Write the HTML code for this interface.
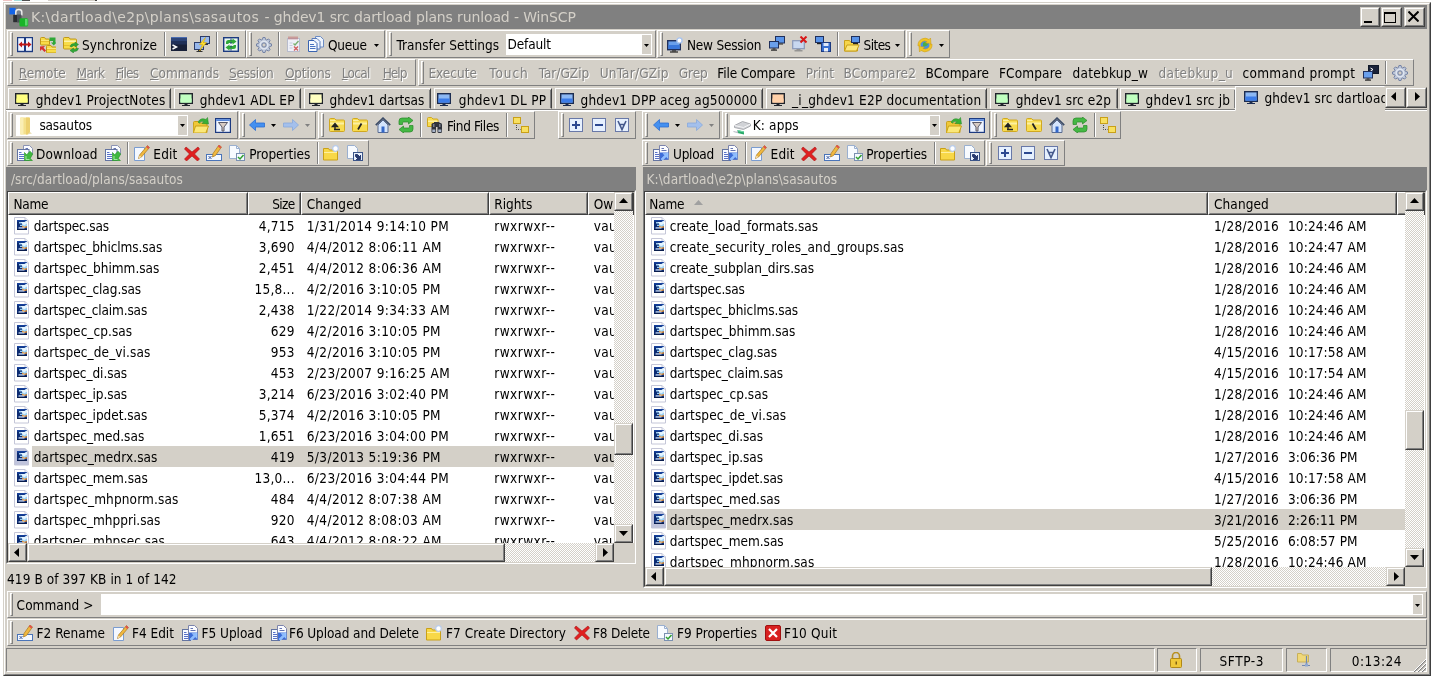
<!DOCTYPE html>
<html><head><meta charset="utf-8"><title>WinSCP</title>
<style>
html,body{margin:0;padding:0;background:#fff;}
body{width:1433px;height:676px;position:relative;overflow:hidden;font-family:"DejaVu Sans Condensed","DejaVu Sans","Liberation Sans",sans-serif;font-size:13.5px;color:#000;}
div,span.t,svg.i{position:absolute;box-sizing:border-box;}
span.t{opacity:0.999;white-space:pre;line-height:16px;height:16px;}
.win{background:#d4d0c8;border:1px solid;border-color:#d4d0c8 #404040 #404040 #d4d0c8;}
.win2{border:1px solid;border-color:#fff #808080 #808080 #fff;}
.title{background:#808080;}
.tt{font-family:"DejaVu Sans",sans-serif;font-size:14px;color:#d4d0c8;}
.band{border:1px solid;border-color:#fff #808080 #808080 #fff;}
.grip{border:1px solid;border-color:#fff #808080 #808080 #fff;}
.sep{border-left:1px solid #808080;border-right:1px solid #fff;}
.dis{color:#808080;text-shadow:1px 1px 0 #fff;}
.btn{background:#d4d0c8;border:1px solid;border-color:#d4d0c8 #404040 #404040 #d4d0c8;}
.btn>div{left:0;top:0;right:0;bottom:0;border:1px solid;border-color:#fff #808080 #808080 #fff;}
.sunk{border:1px solid;border-color:#808080 #fff #fff #808080;}
.sunk2{border:1px solid;border-color:#404040 #d4d0c8 #d4d0c8 #404040;}
.hdr{background:#d4d0c8;border:1px solid;border-color:#fff #404040 #404040 #fff;}
.hdr>div{left:0;top:0;right:0;bottom:0;border:1px solid;border-color:transparent #808080 #808080 transparent;}
.track{background:#e9e7e3;background:repeating-conic-gradient(#fff 0% 25%,#d4d0c8 0% 50%) 0 0/2px 2px;}
.path{background:#808080;}
.pt{color:#d4d0c8;}
.sel{background:#d4d0c8;}
.tab{border:1px solid;border-color:#fff #404040 transparent #fff;}
.panel{border:1px solid;border-color:#808080 #fff #fff #808080;}

</style></head>
<body>
<div style="left:3px;top:0px;width:9px;height:1px;background:#f0c4c4"></div>
<div style="left:14px;top:0px;width:8px;height:1px;background:#a8e0e0"></div>
<div style="left:22px;top:0px;width:8px;height:1px;background:#505050"></div>
<div style="left:48px;top:0px;width:47px;height:1px;background:#d4d0c8"></div>
<div style="left:95px;top:0px;width:2px;height:1px;background:#404040"></div>
<div class="win" style="left:3px;top:2px;width:1428px;height:674px;"></div>
<div class="win2" style="left:4px;top:3px;width:1426px;height:672px;"></div>
<div class="title" style="left:6px;top:5px;width:1421px;height:24px;"></div>
<svg class="i" style="left:8px;top:7px" width="22" height="20" viewBox="0 0 22 20"><rect x="1.400" y="0.800" width="6.200" height="6.600" fill="#1464e8"/><path d="M7.800 8.500v-3.500q0-2.500 3-2.500t3 2.500v3.500" fill="#78808c" stroke="#ececec" stroke-width="1.500"/><rect x="5.200" y="7.800" width="8" height="7.400" fill="#2a2c30"/><rect x="9" y="7.800" width="4.200" height="7.400" fill="#4a5058"/><rect x="11.400" y="11.200" width="8.800" height="8.400" rx="1.500" fill="#18b428"/><rect x="17" y="12" width="2.500" height="6.500" fill="#58d868"/></svg>
<span class="t tt" style="left:31px;top:9px;letter-spacing:0.36px;">K:\dartload\e2p\plans\sasautos</span>
<span class="t tt" style="left:264.4px;top:9px;letter-spacing:-0.13px;">- ghdev1 src dartload plans runload - WinSCP</span>
<div class="btn" style="left:1360px;top:7px;width:20px;height:20px;"><div></div></div>
<div style="left:1364px;top:21px;width:8px;height:2px;background:#000"></div>
<div class="btn" style="left:1381px;top:7px;width:21px;height:20px;"><div></div></div>
<div style="left:1384px;top:12px;width:12px;height:11px;border:1px solid #000;border-top-width:2px"></div>
<div class="btn" style="left:1404px;top:7px;width:21px;height:20px;"><div></div></div>
<svg class="i" style="left:1408px;top:11px" width="11" height="11" viewBox="0 0 11 11"><path d="M0.500 0.500l10 10M10.500 0.500l-10 10" stroke="#000" stroke-width="2"/></svg>
<div class="band" style="left:7px;top:30px;width:239px;height:28px;"></div>
<div class="grip" style="left:10px;top:32px;width:3px;height:24px;"></div>
<svg class="i" style="left:17px;top:37px" width="16" height="16" viewBox="0 0 16 16"><rect x="0.5" y="0.5" width="15" height="14" fill="#eef4ff" stroke="#1c3a80" stroke-width="1.4"/><rect x="7" y="0" width="2" height="15" fill="#1c3a80"/><path d="M1.5 7.5l3.5-3v2h6v-2l3.500 3-3.500 3v-2h-6v2z" fill="#c01818"/></svg>
<svg class="i" style="left:40px;top:37px" width="16" height="16" viewBox="0 0 16 16"><path d="M0.5 1.5q0-1 1-1h3.1l1 1.500h2.9q1 0 1 1v4q0 1-1 1h-7q-1 0-1-1z" fill="#f8dc48" stroke="#c09818"/><path d="M1 3.5h8v1.500h-8z" fill="#fdf2a8"/><path d="M1 4.5h8" stroke="#e8c030"/><path d="M6.5 9.5q0-1 1-1h3.5l1 1.500h3.5q1 0 1 1v4q0 1-1 1h-8q-1 0-1-1z" fill="#f8dc48" stroke="#c09818"/><path d="M7 11.5h9v1.500h-9z" fill="#fdf2a8"/><path d="M7 12.5h9" stroke="#e8c030"/><path d="M9.500 0.500h6v6h-2.500l0-2.500h-3.500z" fill="#30a838"/><path d="M11 5.500h5.500l-2.700 3z" fill="#30a838"/><path d="M0 9.500l5-0.500-1.500 1.700 2.500 2.800-1.500 1.500-2.700-2.700-1.800 1.700z" fill="#d83030"/></svg>
<svg class="i" style="left:63px;top:37px" width="16" height="16" viewBox="0 0 16 16"><path d="M0.5 1.5q0-1 1-1h4.5l1 1.500h5.5q1 0 1 1v8q0 1-1 1h-11q-1 0-1-1z" fill="#f8dc48" stroke="#c09818"/><path d="M1 3.5h12v1.500h-12z" fill="#fdf2a8"/><path d="M1 8.5h12" stroke="#e8c030"/><path d="M7 9.500q1-3.500 5-3v-1.500l3.500 2.500-3.500 2.500v-1.500q-2.500-0.300-3 1.500z" fill="#30a838" stroke="#1c8424" stroke-width="0.500"/><path d="M15.500 11.500q-1 3.500-5 3v1.500l-3.500-2.500 3.500-2.500v1.500q2.500 0.300 3-1.500z" fill="#30a838" stroke="#1c8424" stroke-width="0.500"/></svg>
<span class="t" style="left:82px;top:37px;letter-spacing:0.1px;">Synchronize</span>
<div class="sep" style="left:164px;top:32px;width:2px;height:24px;"></div>
<svg class="i" style="left:171px;top:37px" width="16" height="16" viewBox="0 0 16 16"><rect x="0" y="0" width="16" height="14" fill="#182038"/><rect x="0" y="0" width="16" height="1.500" fill="#4a6cb0"/><rect x="0" y="1.500" width="16" height="3" fill="#2c4478"/><rect x="0" y="4.500" width="16" height="3" fill="#203058"/><path d="M1.500 8l4 2-4 2" fill="none" stroke="#fff" stroke-width="1.400"/></svg>
<svg class="i" style="left:194px;top:36px" width="16" height="16" viewBox="0 0 16 16"><rect x="6.500" y="0.500" width="9" height="7" fill="#98b8ec" stroke="#2c3c68"/><rect x="10" y="8" width="4" height="1" fill="#333"/><rect x="0.500" y="6.500" width="9" height="7" fill="#98b8ec" stroke="#2c3c68"/><rect x="4" y="14" width="3" height="1" fill="#333"/><rect x="2.500" y="15" width="6" height="1" fill="#333"/><path d="M11.500 1.500l-6 7h3l-3 6.500 7-8.500h-3z" fill="#ffe030" stroke="#d8a808" stroke-width="0.600"/></svg>
<div class="sep" style="left:216px;top:32px;width:2px;height:24px;"></div>
<svg class="i" style="left:223px;top:37px" width="16" height="16" viewBox="0 0 16 16"><rect x="0.700" y="0.700" width="14.600" height="13.600" fill="#eaf6f0" stroke="#1c3a80" stroke-width="1.400"/><path d="M3 7v-1.500q0-2.500 2.500-2.500h4v-1.500l4 3-4 3v-1.500h-3.500q-0.500 0-0.500 0.500v0.500z" fill="#30a838"/><path d="M13 8v1.500q0 2.500-2.500 2.500h-4v1.500l-4-3 4-3v1.500h3.500q0.500 0 0.500-0.500v-0.500z" fill="#30a838"/><path d="M8 1.500v12" stroke="#1c3a80" stroke-width="1" stroke-dasharray="2 1.500"/></svg>
<div class="band" style="left:246px;top:30px;width:139px;height:28px;"></div>
<div class="grip" style="left:249px;top:32px;width:3px;height:24px;"></div>
<svg class="i" style="left:256px;top:37px" width="16" height="16" viewBox="0 0 16 16"><path d="M13.21 5.96L13.32 6.26L15.53 6.97L15.53 9.03L13.32 9.74L13.13 10.24L13.00 10.53L14.05 12.59L12.59 14.05L10.53 13.00L10.04 13.21L9.74 13.32L9.03 15.53L6.97 15.53L6.26 13.32L5.76 13.13L5.47 13.00L3.41 14.05L1.95 12.59L3.00 10.53L2.79 10.04L2.68 9.74L0.47 9.03L0.47 6.97L2.68 6.26L2.87 5.76L3.00 5.47L1.95 3.41L3.41 1.95L5.47 3.00L5.96 2.79L6.26 2.68L6.97 0.47L9.03 0.47L9.74 2.68L10.24 2.87L10.53 3.00L12.59 1.95L14.05 3.41L13.00 5.47z" fill="#bcc6d8" stroke="#6c7ca0" stroke-width="0.900" stroke-linejoin="round"/><circle cx="8" cy="8" r="3.800" fill="none" stroke="#dfe5f0" stroke-width="1.400"/><circle cx="8" cy="8" r="2.100" fill="#d4d0c8" stroke="#6c7ca0" stroke-width="0.900"/></svg>
<div class="sep" style="left:278px;top:32px;width:2px;height:24px;"></div>
<svg class="i" style="left:286px;top:36px" width="16" height="16" viewBox="0 0 16 16"><rect x="1.500" y="2.500" width="12" height="13" fill="#eef0f8" stroke="#b8bccc"/><path d="M3 0.500v3M5 0.500v3M7 0.500v3M9 0.500v3M11 0.500v3" stroke="#c06868" stroke-width="1"/><path d="M7.500 7.500l1.500 1.500 3.500-4" fill="none" stroke="#78b070" stroke-width="1.400"/><path d="M8 10.500l4 4M12 10.500l-4 4" stroke="#d06060" stroke-width="1.400"/><path d="M3.500 7h3M3.500 9.500h3M3.500 12h3" stroke="#c4cce0"/></svg>
<svg class="i" style="left:308px;top:36px" width="16" height="16" viewBox="0 0 16 16"><path d="M7.500 0.500h5l3 3v7.500h-8z" fill="#eef4fd" stroke="#6c8cc4"/><path d="M4 2.500h5l3 3v7.500h-8z" fill="#eef4fd" stroke="#5a7cbc"/><path d="M0.500 4.500h5.500l3 3v8h-8.500z" fill="#f6faff" stroke="#3a64b0"/><path d="M2 8.500h4M2 10.500h5.500M2 12.500h5.500" stroke="#4a74c0" stroke-width="1"/></svg>
<span class="t" style="left:328px;top:37px;letter-spacing:-0.23px;">Queue</span>
<svg class="i" style="left:374px;top:44px" width="5" height="3" viewBox="0 0 5 3"><path d="M0 0h5L2.5 3z" fill="#000"/></svg>
<div class="band" style="left:386px;top:30px;width:270px;height:28px;"></div>
<div class="grip" style="left:389px;top:32px;width:3px;height:24px;"></div>
<span class="t" style="left:396.5px;top:37px;letter-spacing:0.02px;">Transfer Settings</span>
<div style="left:506px;top:34px;width:146px;height:21px;background:#fff"></div>
<span class="t" style="left:507.5px;top:36px;letter-spacing:-0.15px;">Default</span>
<div style="left:642px;top:35px;width:9px;height:19px;background:#d4d0c8"></div>
<svg class="i" style="left:644px;top:44px" width="5" height="3" viewBox="0 0 5 3"><path d="M0 0h5L2.5 3z" fill="#000"/></svg>
<div class="band" style="left:657px;top:30px;width:248px;height:28px;"></div>
<div class="grip" style="left:660px;top:32px;width:3px;height:24px;"></div>
<svg class="i" style="left:667px;top:37px" width="16" height="16" viewBox="0 0 16 16"><rect x="0.700" y="3.700" width="12.600" height="9" fill="#6aa0ec" stroke="#20305c" stroke-width="1.400"/><rect x="1.400" y="8" width="11.200" height="4" fill="#3a78dc"/><rect x="5" y="13.400" width="4" height="1" fill="#222"/><rect x="3" y="14.400" width="8" height="1.200" fill="#222"/><circle cx="12.500" cy="3.500" r="2.600" fill="#fff" stroke="#a8c4f0" stroke-width="1.400"/></svg>
<span class="t" style="left:687px;top:37px;letter-spacing:-0.23px;">New Session</span>
<svg class="i" style="left:769px;top:36px" width="16" height="16" viewBox="0 0 16 16"><rect x="6.500" y="0.500" width="9" height="6.500" fill="#5a94e8" stroke="#20305c"/><rect x="0.500" y="5.500" width="9" height="6.500" fill="#6aa0ec" stroke="#20305c"/><rect x="10" y="7.500" width="4" height="1" fill="#222"/><rect x="3.500" y="12.500" width="3" height="1" fill="#222"/><rect x="2" y="13.500" width="6" height="1.200" fill="#222"/></svg>
<svg class="i" style="left:792px;top:36px" width="16" height="16" viewBox="0 0 16 16"><rect x="0.700" y="4.700" width="11.600" height="8" fill="#c8d8f0" stroke="#8898b8" stroke-width="1.200"/><rect x="4.500" y="13.200" width="4" height="1" fill="#888"/><rect x="2.500" y="14.200" width="8" height="1.200" fill="#888"/><path d="M8.500 0.500l6 6M14.500 0.500l-6 6" stroke="#d81818" stroke-width="2"/></svg>
<svg class="i" style="left:815px;top:36px" width="16" height="16" viewBox="0 0 16 16"><rect x="0.500" y="0.500" width="8" height="6" fill="#5a94e8" stroke="#20305c"/><rect x="2" y="7" width="5" height="1.200" fill="#222"/><rect x="6.500" y="6.500" width="9" height="9" fill="#3a70d0" stroke="#1c3a80"/><rect x="8.500" y="7" width="5" height="3" fill="#dfe8f8"/><rect x="9" y="12" width="4" height="3.500" fill="#e8eef8"/></svg>
<div class="sep" style="left:837px;top:32px;width:2px;height:24px;"></div>
<svg class="i" style="left:844px;top:36px" width="16" height="16" viewBox="0 0 16 16"><path d="M0.500 4.500h5l1 1.500h7v9h-13z" fill="#f6d64a" stroke="#c9a018"/><path d="M0.500 15l2.500-6h12l-2.500 6z" fill="#fbe67a" stroke="#c9a018"/><rect x="7.500" y="0.500" width="8" height="6" fill="#5a94e8" stroke="#20305c"/><rect x="9" y="7" width="5" height="1.200" fill="#222"/></svg>
<span class="t" style="left:863.5px;top:37px;letter-spacing:-0.56px;">Sites</span>
<svg class="i" style="left:895px;top:44px" width="5" height="3" viewBox="0 0 5 3"><path d="M0 0h5L2.5 3z" fill="#000"/></svg>
<div class="band" style="left:906px;top:30px;width:44px;height:28px;"></div>
<div class="grip" style="left:909px;top:32px;width:3px;height:24px;"></div>
<svg class="i" style="left:917px;top:37px" width="16" height="16" viewBox="0 0 16 16"><circle cx="8" cy="8" r="4.500" fill="#4a90e0"/><path d="M6 6q2-2 4 0t-1 3-3 0z" fill="#48b048"/><path d="M1 9a7 7 0 0 1 11-6.500l1.500-1.500 0.500 5.500-5.500-0.500 1.500-1.500a4.800 4.800 0 0 0-7 4.500z" fill="#f0c428" stroke="#c89810" stroke-width="0.500"/><path d="M15 7a7 7 0 0 1-11 6.500l-1.500 1.500-0.500-5.500 5.500 0.500-1.500 1.500a4.800 4.800 0 0 0 7-4.500z" fill="#f0c428" stroke="#c89810" stroke-width="0.500"/></svg>
<svg class="i" style="left:939px;top:44px" width="5" height="3" viewBox="0 0 5 3"><path d="M0 0h5L2.5 3z" fill="#000"/></svg>
<div class="band" style="left:7px;top:59px;width:409px;height:27px;"></div>
<div class="grip" style="left:10px;top:61px;width:3px;height:23px;"></div>
<span class="t dis" style="left:18.8px;top:65px;letter-spacing:0.04px"><u>R</u>emote</span>
<span class="t dis" style="left:76.6px;top:65px;letter-spacing:-0.52px"><u>M</u>ark</span>
<span class="t dis" style="left:115.6px;top:65px;letter-spacing:-0.79px"><u>F</u>iles</span>
<span class="t dis" style="left:150px;top:65px;letter-spacing:0.03px"><u>C</u>ommands</span>
<span class="t dis" style="left:229px;top:65px;letter-spacing:-0.26px"><u>S</u>ession</span>
<span class="t dis" style="left:284.9px;top:65px;letter-spacing:-0.15px"><u>O</u>ptions</span>
<span class="t dis" style="left:341.8px;top:65px;letter-spacing:-0.74px"><u>L</u>ocal</span>
<span class="t dis" style="left:382.7px;top:65px;letter-spacing:-0.97px"><u>H</u>elp</span>
<div class="band" style="left:418px;top:59px;width:996px;height:27px;"></div>
<div class="grip" style="left:421px;top:61px;width:3px;height:23px;"></div>
<span class="t dis" style="left:428.4px;top:65px;letter-spacing:0.01px;">Execute</span>
<span class="t dis" style="left:489.3px;top:65px;letter-spacing:0.96px;">Touch</span>
<span class="t dis" style="left:538.7px;top:65px;letter-spacing:0.01px;">Tar/GZip</span>
<span class="t dis" style="left:599.8px;top:65px;letter-spacing:0.18px;">UnTar/GZip</span>
<span class="t dis" style="left:678.8px;top:65px;letter-spacing:-0.1px;">Grep</span>
<span class="t" style="left:717.3px;top:65px;letter-spacing:-0.11px;">File Compare</span>
<span class="t dis" style="left:805.8px;top:65px;letter-spacing:0.07px;">Print</span>
<span class="t dis" style="left:843.5px;top:65px;letter-spacing:0.2px;">BCompare2</span>
<span class="t" style="left:925.6px;top:65px;letter-spacing:0.03px;">BCompare</span>
<span class="t" style="left:999px;top:65px;letter-spacing:0.13px;">FCompare</span>
<span class="t" style="left:1072.6px;top:65px;letter-spacing:0.25px;">datebkup_w</span>
<span class="t dis" style="left:1158.5px;top:65px;letter-spacing:0.38px;">datebkup_u</span>
<span class="t" style="left:1242.5px;top:65px;letter-spacing:0.3px;">command prompt</span>
<svg class="i" style="left:1363px;top:65px" width="16" height="16" viewBox="0 0 16 16"><rect x="5.500" y="0.500" width="10" height="8" fill="#1a2238" stroke="#101828"/><path d="M7.500 3l2.500 1.500-2.500 1.500" fill="none" stroke="#fff" stroke-width="1"/><rect x="0.500" y="6.500" width="9" height="6.500" fill="#6aa0ec" stroke="#20305c"/><rect x="3.500" y="13.500" width="3" height="1" fill="#222"/><rect x="2" y="14.500" width="6" height="1.200" fill="#222"/></svg>
<div class="sep" style="left:1385px;top:61px;width:2px;height:23px;"></div>
<svg class="i" style="left:1392px;top:65px" width="16" height="16" viewBox="0 0 16 16"><path d="M13.21 5.96L13.32 6.26L15.53 6.97L15.53 9.03L13.32 9.74L13.13 10.24L13.00 10.53L14.05 12.59L12.59 14.05L10.53 13.00L10.04 13.21L9.74 13.32L9.03 15.53L6.97 15.53L6.26 13.32L5.76 13.13L5.47 13.00L3.41 14.05L1.95 12.59L3.00 10.53L2.79 10.04L2.68 9.74L0.47 9.03L0.47 6.97L2.68 6.26L2.87 5.76L3.00 5.47L1.95 3.41L3.41 1.95L5.47 3.00L5.96 2.79L6.26 2.68L6.97 0.47L9.03 0.47L9.74 2.68L10.24 2.87L10.53 3.00L12.59 1.95L14.05 3.41L13.00 5.47z" fill="#bcc6d8" stroke="#6c7ca0" stroke-width="0.900" stroke-linejoin="round"/><circle cx="8" cy="8" r="3.800" fill="none" stroke="#dfe5f0" stroke-width="1.400"/><circle cx="8" cy="8" r="2.100" fill="#d4d0c8" stroke="#6c7ca0" stroke-width="0.900"/></svg>
<div class="tab" style="left:8px;top:88px;width:163px;height:21px;"><div style="left:auto;right:0;top:1px;bottom:0;width:1px;background:#808080"></div></div>
<svg class="i" style="left:15px;top:93px" width="14" height="13" viewBox="0 0 14 13"><rect x="0.700" y="0.700" width="12.600" height="9.600" fill="#ffff80" stroke="#20242c" stroke-width="1.400"/><rect x="1.400" y="5.500" width="11.200" height="4.100" fill="#ffff80"/><rect x="5.500" y="11" width="3" height="1" fill="#20242c"/><rect x="3" y="12" width="8" height="1" fill="#20242c"/></svg>
<span class="t" style="left:35.7px;top:92px;letter-spacing:0.2px;">ghdev1 ProjectNotes</span>
<div class="tab" style="left:174px;top:88px;width:127px;height:21px;"><div style="left:auto;right:0;top:1px;bottom:0;width:1px;background:#808080"></div></div>
<svg class="i" style="left:179px;top:93px" width="14" height="13" viewBox="0 0 14 13"><rect x="0.700" y="0.700" width="12.600" height="9.600" fill="#c0ffc0" stroke="#20242c" stroke-width="1.400"/><rect x="1.400" y="5.500" width="11.200" height="4.100" fill="#c0ffc0"/><rect x="5.500" y="11" width="3" height="1" fill="#20242c"/><rect x="3" y="12" width="8" height="1" fill="#20242c"/></svg>
<span class="t" style="left:199.7px;top:92px;letter-spacing:0.18px;">ghdev1 ADL EP</span>
<div class="tab" style="left:304px;top:88px;width:127px;height:21px;"><div style="left:auto;right:0;top:1px;bottom:0;width:1px;background:#808080"></div></div>
<svg class="i" style="left:309px;top:93px" width="14" height="13" viewBox="0 0 14 13"><rect x="0.700" y="0.700" width="12.600" height="9.600" fill="#ffffc0" stroke="#20242c" stroke-width="1.400"/><rect x="1.400" y="5.500" width="11.200" height="4.100" fill="#ffffc0"/><rect x="5.500" y="11" width="3" height="1" fill="#20242c"/><rect x="3" y="12" width="8" height="1" fill="#20242c"/></svg>
<span class="t" style="left:329.6px;top:92px;letter-spacing:0.03px;">ghdev1 dartsas</span>
<div class="tab" style="left:434px;top:88px;width:118px;height:21px;"><div style="left:auto;right:0;top:1px;bottom:0;width:1px;background:#808080"></div></div>
<svg class="i" style="left:437px;top:93px" width="14" height="13" viewBox="0 0 14 13"><rect x="0.700" y="0.700" width="12.600" height="9.600" fill="#8cb8f4" stroke="#1c2c50" stroke-width="1.400"/><rect x="1.400" y="5.500" width="11.200" height="4.100" fill="#3c7ce8"/><rect x="5.500" y="11" width="3" height="1" fill="#1c2c50"/><rect x="3" y="12" width="8" height="1" fill="#1c2c50"/></svg>
<span class="t" style="left:458.8px;top:92px;letter-spacing:0.31px;">ghdev1 DL PP</span>
<div class="tab" style="left:555px;top:88px;width:208px;height:21px;"><div style="left:auto;right:0;top:1px;bottom:0;width:1px;background:#808080"></div></div>
<svg class="i" style="left:560px;top:93px" width="14" height="13" viewBox="0 0 14 13"><rect x="0.700" y="0.700" width="12.600" height="9.600" fill="#8cb8f4" stroke="#1c2c50" stroke-width="1.400"/><rect x="1.400" y="5.500" width="11.200" height="4.100" fill="#3c7ce8"/><rect x="5.500" y="11" width="3" height="1" fill="#1c2c50"/><rect x="3" y="12" width="8" height="1" fill="#1c2c50"/></svg>
<span class="t" style="left:580.5px;top:92px;letter-spacing:0.21px;">ghdev1 DPP aceg ag500000</span>
<div class="tab" style="left:766px;top:88px;width:221px;height:21px;"><div style="left:auto;right:0;top:1px;bottom:0;width:1px;background:#808080"></div></div>
<svg class="i" style="left:771px;top:93px" width="14" height="13" viewBox="0 0 14 13"><rect x="0.700" y="0.700" width="12.600" height="9.600" fill="#ffd0a8" stroke="#20242c" stroke-width="1.400"/><rect x="1.400" y="5.500" width="11.200" height="4.100" fill="#ffd0a8"/><rect x="5.500" y="11" width="3" height="1" fill="#20242c"/><rect x="3" y="12" width="8" height="1" fill="#20242c"/></svg>
<span class="t" style="left:792px;top:92px;letter-spacing:0.22px;">_i_ghdev1 E2P documentation</span>
<div class="tab" style="left:990px;top:88px;width:128px;height:21px;"><div style="left:auto;right:0;top:1px;bottom:0;width:1px;background:#808080"></div></div>
<svg class="i" style="left:995px;top:93px" width="14" height="13" viewBox="0 0 14 13"><rect x="0.700" y="0.700" width="12.600" height="9.600" fill="#c0ffc0" stroke="#20242c" stroke-width="1.400"/><rect x="1.400" y="5.500" width="11.200" height="4.100" fill="#c0ffc0"/><rect x="5.500" y="11" width="3" height="1" fill="#20242c"/><rect x="3" y="12" width="8" height="1" fill="#20242c"/></svg>
<span class="t" style="left:1015.7px;top:92px;letter-spacing:0.11px;">ghdev1 src e2p</span>
<div class="tab" style="left:1120px;top:88px;width:116px;height:21px;"><div style="left:auto;right:0;top:1px;bottom:0;width:1px;background:#808080"></div></div>
<svg class="i" style="left:1125px;top:93px" width="14" height="13" viewBox="0 0 14 13"><rect x="0.700" y="0.700" width="12.600" height="9.600" fill="#c0ffc0" stroke="#20242c" stroke-width="1.400"/><rect x="1.400" y="5.500" width="11.200" height="4.100" fill="#c0ffc0"/><rect x="5.500" y="11" width="3" height="1" fill="#20242c"/><rect x="3" y="12" width="8" height="1" fill="#20242c"/></svg>
<span class="t" style="left:1145.6px;top:92px;letter-spacing:0.2px;">ghdev1 src jb</span>
<div style="left:6px;top:109px;width:1230px;height:1px;background:#808080"></div>
<div style="left:6px;top:110px;width:1230px;height:1px;background:#fff"></div>
<div style="left:1385px;top:109px;width:42px;height:1px;background:#808080"></div>
<div style="left:1385px;top:110px;width:42px;height:1px;background:#fff"></div>
<div style="left:1235px;top:86px;width:150px;height:25px;background:#d4d0c8;border:1px solid;border-color:#fff transparent transparent #fff;"></div>
<svg class="i" style="left:1244px;top:91px" width="14" height="13" viewBox="0 0 14 13"><rect x="0.700" y="0.700" width="12.600" height="9.600" fill="#8cb8f4" stroke="#1c2c50" stroke-width="1.400"/><rect x="1.400" y="5.500" width="11.200" height="4.100" fill="#3c7ce8"/><rect x="5.500" y="11" width="3" height="1" fill="#1c2c50"/><rect x="3" y="12" width="8" height="1" fill="#1c2c50"/></svg>
<div style="left:1264px;top:87px;width:121px;height:22px;overflow:hidden"><span class="t" style="left:0.400px;top:3px;letter-spacing:0.11px">ghdev1 src dartload plans runload</span></div>
<div class="btn" style="left:1385px;top:87px;width:21px;height:21px;"><div></div></div>
<svg class="i" style="left:1391px;top:92px" width="5" height="9" viewBox="0 0 5 9"><path d="M5 0v9L0 4.500z"/></svg>
<div class="btn" style="left:1406px;top:87px;width:21px;height:21px;"><div></div></div>
<svg class="i" style="left:1415px;top:92px" width="5" height="9" viewBox="0 0 5 9"><path d="M0 0v9L5 4.500z"/></svg>
<div class="band" style="left:7px;top:111px;width:231px;height:28px;"></div>
<div class="grip" style="left:10px;top:113px;width:3px;height:24px;"></div>
<div style="left:16px;top:115px;width:172px;height:21px;background:#fff"></div>
<svg class="i" style="left:19px;top:117px" width="14" height="19" viewBox="0 0 14 19"><path d="M1 1.500q0-1 1-1h8q1 0 1 1v14l-2.500 2h-6.500q-1 0-1-1z" fill="#f4e08c"/><path d="M1 1.500q0-1 1-1h2.500v17h-2.500q-1 0-1-1z" fill="#faeeb4"/><path d="M7 0.500h3q1 0 1 1v14l-2.500 2h-1.500z" fill="#ecd070"/><path d="M11 15l2 1.500-4.500 1z" fill="#e8dcb0"/></svg>
<span class="t" style="left:39.4px;top:117px;letter-spacing:-0.15px;">sasautos</span>
<div style="left:178px;top:116px;width:9px;height:19px;background:#d4d0c8"></div>
<svg class="i" style="left:180px;top:124px" width="5" height="3" viewBox="0 0 5 3"><path d="M0 0h5L2.5 3z" fill="#000"/></svg>
<svg class="i" style="left:193px;top:117px" width="16" height="16" viewBox="0 0 16 16"><path d="M0.500 5.500q0-1 1-1h3.500l1.500 1.500h6.500q1 0 1 1v8q0 1-1 1h-12q-1 0-1-1z" fill="#f0c838" stroke="#c8a018"/><path d="M0.500 15.500l2-6.500h13l-2.500 6.500q-0.200 0.500-1 0.500h-11z" fill="#fbe878" stroke="#c8a018"/><path d="M5 5q3-5 8-2.500l1.500-2 1 6.500-6.500-0.500 1.800-1.800q-3-1.200-4.500 1.500z" fill="#38b038" stroke="#208820" stroke-width="0.500"/></svg>
<svg class="i" style="left:215px;top:118px" width="16" height="16" viewBox="0 0 16 16"><rect x="0.600" y="0.600" width="14.800" height="13.800" fill="#eef4ff" stroke="#1c3a80" stroke-width="1.200"/><rect x="1.200" y="1.200" width="13.600" height="1.800" fill="#5888dc"/><path d="M3.500 4.500h9l-3.500 4.500v4h-2v-4z" fill="#d8ccc4" stroke="#585868" stroke-width="1"/></svg>
<div class="band" style="left:239px;top:111px;width:77px;height:28px;"></div>
<div class="grip" style="left:242px;top:113px;width:3px;height:24px;"></div>
<svg class="i" style="left:249px;top:119px" width="16" height="12" viewBox="0 0 16 12"><path d="M0.500 6l6-5.500v3.500h9v4h-9v3.500z" fill="#4490f0" stroke="#2c6cd0" stroke-width="0.800"/></svg>
<svg class="i" style="left:271px;top:124px" width="5" height="3" viewBox="0 0 5 3"><path d="M0 0h5L2.5 3z" fill="#000"/></svg>
<svg class="i" style="left:283px;top:119px" width="16" height="12" viewBox="0 0 16 12"><path d="M15.500 6l-6-5.500v3.500h-9v4h9v3.500z" fill="#a4c0ec" stroke="#88a8dc" stroke-width="0.800"/></svg>
<svg class="i" style="left:305px;top:124px" width="5" height="3" viewBox="0 0 5 3"><path d="M0 0h5L2.5 3z" fill="#808080"/></svg>
<div class="band" style="left:318px;top:111px;width:217px;height:28px;"></div>
<div class="grip" style="left:321px;top:113px;width:3px;height:24px;"></div>
<svg class="i" style="left:329px;top:117px" width="16" height="16" viewBox="0 0 16 16"><path d="M0.500 2.500q0-1 1-1h4l1.500 1.500h7.500q1 0 1 1v9.500q0 1-1 1h-13q-1 0-1-1z" fill="#f8dc50" stroke="#d0a820"/><path d="M1 5.500h14v2h-14z" fill="#fdf0a0"/><path d="M1 3.500h5.500" stroke="#fdf0a0"/><path d="M5 12.500h6M6 12V7.500M3.500 9.500l2.500-3 2.500 3z" fill="#222" stroke="#222" stroke-width="1.400"/></svg>
<svg class="i" style="left:352px;top:117px" width="16" height="16" viewBox="0 0 16 16"><path d="M0.500 2.500q0-1 1-1h4l1.500 1.500h7.500q1 0 1 1v9.500q0 1-1 1h-13q-1 0-1-1z" fill="#f8dc50" stroke="#d0a820"/><path d="M1 5.500h14v2h-14z" fill="#fdf0a0"/><path d="M1 3.500h5.500" stroke="#fdf0a0"/><path d="M6 12.500l3.500-6" stroke="#222" stroke-width="1.800"/></svg>
<svg class="i" style="left:375px;top:117px" width="16" height="16" viewBox="0 0 16 16"><path d="M3 8v7.500h10v-7.500l-5-5z" fill="#d4e4fc" stroke="#5a6c90" stroke-width="1"/><rect x="6.500" y="9.500" width="3" height="6" fill="#3468c8"/><path d="M0.800 8.200l7.200-7 7.200 7" fill="none" stroke="#3c4c68" stroke-width="1.800" stroke-linejoin="miter"/></svg>
<svg class="i" style="left:398px;top:117px" width="16" height="16" viewBox="0 0 16 16"><path d="M1 7.500v-3.500q0-3 3-3h6.500v-1l4.500 3.500-4.500 3.500v-2h-5q-1 0-1 1v1.500z" fill="#44b844" stroke="#288828" stroke-width="0.700"/><path d="M15 8.500v3.500q0 3-3 3h-6.500v1l-4.500-3.500 4.500-3.500v2h5q1 0 1-1v-1.500z" fill="#44b844" stroke="#288828" stroke-width="0.700"/></svg>
<div class="sep" style="left:420px;top:113px;width:2px;height:24px;"></div>
<svg class="i" style="left:427px;top:117px" width="16" height="16" viewBox="0 0 16 16"><path d="M0.500 1.500q0-1 1-1h3l1.500 1.500h4q1 0 1 1v6.500h-10.500z" fill="#f8dc50" stroke="#d0a820"/><path d="M1 3.500h9.500v1.500h-9.500z" fill="#fdf0a0"/><rect x="4.500" y="6" width="4.500" height="10" rx="1.500" fill="#30343c"/><rect x="10.500" y="6" width="4.500" height="10" rx="1.500" fill="#30343c"/><rect x="7" y="5" width="5.500" height="5" fill="#30343c"/><rect x="5.300" y="12.500" width="3" height="2.500" fill="#a8b4c8"/><rect x="11.300" y="12.500" width="3" height="2.500" fill="#a8b4c8"/><rect x="6" y="7" width="1.500" height="3" fill="#787e8c"/><rect x="12" y="7" width="1.500" height="3" fill="#787e8c"/></svg>
<span class="t" style="left:447px;top:118px;letter-spacing:-0.31px;">Find Files</span>
<div class="sep" style="left:506px;top:113px;width:2px;height:24px;"></div>
<svg class="i" style="left:513px;top:117px" width="16" height="16" viewBox="0 0 16 16"><rect x="0.500" y="0.500" width="7" height="6" fill="#f8e060" stroke="#c9a018"/><rect x="8.500" y="9.500" width="7" height="6" fill="#f8e060" stroke="#c9a018"/><path d="M3.500 8v4.500h4" fill="none" stroke="#444" stroke-dasharray="1 1"/></svg>
<div class="band" style="left:558px;top:111px;width:78px;height:28px;"></div>
<div class="grip" style="left:561px;top:113px;width:3px;height:24px;"></div>
<svg class="i" style="left:569px;top:118px" width="14" height="14" viewBox="0 0 14 14"><rect x="0.500" y="0.500" width="13" height="13" fill="#e6f0fe" stroke="#6878a8"/><path d="M3 7h8M7 3v8" stroke="#2c4890" stroke-width="2"/></svg>
<svg class="i" style="left:592px;top:118px" width="14" height="14" viewBox="0 0 14 14"><rect x="0.500" y="0.500" width="13" height="13" fill="#e6f0fe" stroke="#6878a8"/><path d="M3 7h8" stroke="#2c4890" stroke-width="2"/></svg>
<svg class="i" style="left:615px;top:118px" width="14" height="14" viewBox="0 0 14 14"><rect x="0.500" y="0.500" width="13" height="13" fill="#e6f0fe" stroke="#6878a8"/><path d="M3 3l4 8.500 4-8.500M4.500 6.500h5" fill="none" stroke="#44588c" stroke-width="1.600"/></svg>
<div class="band" style="left:7px;top:140px;width:362px;height:26px;"></div>
<div class="grip" style="left:10px;top:142px;width:3px;height:22px;"></div>
<svg class="i" style="left:17px;top:145px" width="16" height="16" viewBox="0 0 16 16"><path d="M6.500 0.500h6l3 3v6h-9z" fill="#fbfcff" stroke="#8c94b4"/><path d="M8.500 3.500h2.500" stroke="#6474b4"/><rect x="0.500" y="4.500" width="11.500" height="11" fill="#f8fbff" stroke="#6474a0"/><path d="M2 7.500h2.500M2 9.500h5M2 11.500h5M2 13.500h5" stroke="#5870c8"/><path d="M15.700 9l-2.700-2.800-3.300 3.600-2.200-2.300v8.200h8l-2.300-2.300z" fill="#40b840" stroke="#249024" stroke-width="0.600"/><path d="M9 11v3.500h3.500" fill="none" stroke="#b8f0b8" stroke-width="0.800"/></svg>
<span class="t" style="left:36px;top:146px;letter-spacing:0.16px;">Download</span>
<svg class="i" style="left:105px;top:145px" width="16" height="16" viewBox="0 0 16 16"><path d="M6.500 0.500h6l3 3v6h-9z" fill="#fbfcff" stroke="#8c94b4"/><path d="M8.500 3.500h2.500" stroke="#6474b4"/><rect x="0.500" y="4.500" width="11.500" height="11" fill="#f8fbff" stroke="#6474a0"/><path d="M2 7.500h2.500M2 9.500h5M2 11.500h5M2 13.500h5" stroke="#5870c8"/><path d="M15.700 9l-2.700-2.800-3.300 3.600-2.200-2.300v8.200h8l-2.300-2.300z" fill="#40b840" stroke="#249024" stroke-width="0.600"/><path d="M9 11v3.500h3.500" fill="none" stroke="#b8f0b8" stroke-width="0.800"/></svg>
<div class="sep" style="left:127px;top:142px;width:2px;height:22px;"></div>
<svg class="i" style="left:134px;top:145px" width="16" height="16" viewBox="0 0 16 16"><path d="M0.500 2.500h10v13h-10z" fill="#f4f8ff" stroke="#7a9cd0"/><path d="M13.500 0.500l2 2-8 9.500-3 1.500 1-3.500z" fill="#f0b840" stroke="#a87820" stroke-width="0.700"/><path d="M13.500 0.500l2 2-1.300 1.500-2-2z" fill="#e05050"/><path d="M4.500 13.500l1-3 2 1.500z" fill="#f8e0b0"/></svg>
<span class="t" style="left:153.3px;top:146px;letter-spacing:0.16px;">Edit</span>
<svg class="i" style="left:184px;top:146px" width="16" height="15" viewBox="0 0 16 15"><path d="M2 1l6 5 6-5 1.500 2-5 5 5 5-2 2-5.500-5-5.500 5-2-2 5-5-5-5z" fill="#e02020" stroke="#a81010" stroke-width="0.600"/></svg>
<svg class="i" style="left:206px;top:145px" width="16" height="16" viewBox="0 0 16 16"><rect x="0.500" y="9.500" width="15" height="6" fill="#f4f8ff" stroke="#4a74b8"/><path d="M2.500 11l3 3M5.500 11l-3 3" stroke="#3a5aa0"/><path d="M13 0l2.500 2-6 8.500-3 1.500 0.500-3.500z" fill="#f0b840" stroke="#a87820" stroke-width="0.700"/><path d="M13 0l2.500 2-1.200 1.600-2.500-2z" fill="#e05050"/></svg>
<svg class="i" style="left:229px;top:145px" width="16" height="16" viewBox="0 0 16 16"><path d="M0.500 0.500h7l3 3v10h-10z" fill="#f8fbff" stroke="#9ab0d0"/><path d="M7.500 0.500v3h3" fill="none" stroke="#9ab0d0"/><rect x="7.500" y="8.500" width="8" height="7" fill="#f4f8ff" stroke="#7a90b0"/><path d="M9 12l2 2 3.500-4" fill="none" stroke="#30a030" stroke-width="1.500"/></svg>
<span class="t" style="left:249.3px;top:146px;letter-spacing:-0.04px;">Properties</span>
<div class="sep" style="left:317px;top:142px;width:2px;height:22px;"></div>
<svg class="i" style="left:323px;top:145px" width="16" height="16" viewBox="0 0 16 16"><path d="M0.500 3.500h5l1 1.500h8v10h-14z" fill="#f8d848" stroke="#c9a018"/><rect x="1" y="7" width="13" height="1" fill="#fff0a0"/><circle cx="12.500" cy="3.500" r="2.800" fill="#fff" stroke="#b8ccec" stroke-width="1.200"/></svg>
<svg class="i" style="left:347px;top:145px" width="16" height="16" viewBox="0 0 16 16"><path d="M0.500 0.500h7l3 3v10h-10z" fill="#f8fbff" stroke="#9ab0d0"/><rect x="6.500" y="7.500" width="9" height="8" fill="#e8f0fc" stroke="#3a5488"/><path d="M8.500 9.500h2l3 3v-2.500h0v4.500h-4.500l2.500 0-3-3z" fill="#2a3c70" stroke="#2a3c70"/></svg>
<div class="band" style="left:642px;top:111px;width:78px;height:28px;"></div>
<div class="grip" style="left:645px;top:113px;width:3px;height:24px;"></div>
<svg class="i" style="left:653px;top:119px" width="16" height="12" viewBox="0 0 16 12"><path d="M0.500 6l6-5.500v3.500h9v4h-9v3.500z" fill="#4490f0" stroke="#2c6cd0" stroke-width="0.800"/></svg>
<svg class="i" style="left:675px;top:124px" width="5" height="3" viewBox="0 0 5 3"><path d="M0 0h5L2.5 3z" fill="#000"/></svg>
<svg class="i" style="left:687px;top:119px" width="16" height="12" viewBox="0 0 16 12"><path d="M15.500 6l-6-5.500v3.500h-9v4h9v3.500z" fill="#a4c0ec" stroke="#88a8dc" stroke-width="0.800"/></svg>
<svg class="i" style="left:709px;top:124px" width="5" height="3" viewBox="0 0 5 3"><path d="M0 0h5L2.5 3z" fill="#808080"/></svg>
<div class="band" style="left:722px;top:111px;width:268px;height:28px;"></div>
<div class="grip" style="left:725px;top:113px;width:3px;height:24px;"></div>
<div style="left:730px;top:115px;width:210px;height:21px;background:#fff"></div>
<svg class="i" style="left:733px;top:121px" width="18" height="14" viewBox="0 0 18 14"><path d="M1.500 4.500l8-4 8 2.500v2l-7 3.500-9-2z" fill="#d0d2d6" stroke="#9a9ca2" stroke-width="0.800"/><path d="M1.500 4.500l9 2 7-3.500" fill="none" stroke="#f4f4f6" stroke-width="1"/><path d="M4.500 9l6.500 1.500v3l-6.500-1.500z" fill="#28a868"/><path d="M4.500 9l6.500 1.500v1l-6.500-1.500z" fill="#70dca8"/><path d="M0.500 10.500l4 1v-1.500" fill="none" stroke="#b8bcc4" stroke-width="1.200"/></svg>
<span class="t" style="left:752.7px;top:117px;letter-spacing:0.15px;">K: apps</span>
<div style="left:930px;top:116px;width:9px;height:19px;background:#d4d0c8"></div>
<svg class="i" style="left:932px;top:124px" width="5" height="3" viewBox="0 0 5 3"><path d="M0 0h5L2.5 3z" fill="#000"/></svg>
<svg class="i" style="left:946px;top:117px" width="16" height="16" viewBox="0 0 16 16"><path d="M0.500 5.500q0-1 1-1h3.500l1.500 1.500h6.500q1 0 1 1v8q0 1-1 1h-12q-1 0-1-1z" fill="#f0c838" stroke="#c8a018"/><path d="M0.500 15.500l2-6.500h13l-2.500 6.500q-0.200 0.500-1 0.500h-11z" fill="#fbe878" stroke="#c8a018"/><path d="M5 5q3-5 8-2.500l1.500-2 1 6.500-6.500-0.500 1.800-1.800q-3-1.200-4.500 1.500z" fill="#38b038" stroke="#208820" stroke-width="0.500"/></svg>
<svg class="i" style="left:969px;top:118px" width="16" height="16" viewBox="0 0 16 16"><rect x="0.600" y="0.600" width="14.800" height="13.800" fill="#eef4ff" stroke="#1c3a80" stroke-width="1.200"/><rect x="1.200" y="1.200" width="13.600" height="1.800" fill="#5888dc"/><path d="M3.500 4.500h9l-3.500 4.500v4h-2v-4z" fill="#d8ccc4" stroke="#585868" stroke-width="1"/></svg>
<div class="band" style="left:991px;top:111px;width:130px;height:28px;"></div>
<div class="grip" style="left:994px;top:113px;width:3px;height:24px;"></div>
<svg class="i" style="left:1002px;top:117px" width="16" height="16" viewBox="0 0 16 16"><path d="M0.500 2.500q0-1 1-1h4l1.500 1.500h7.500q1 0 1 1v9.500q0 1-1 1h-13q-1 0-1-1z" fill="#f8dc50" stroke="#d0a820"/><path d="M1 5.500h14v2h-14z" fill="#fdf0a0"/><path d="M1 3.500h5.500" stroke="#fdf0a0"/><path d="M5 12.500h6M6 12V7.500M3.500 9.500l2.500-3 2.500 3z" fill="#222" stroke="#222" stroke-width="1.400"/></svg>
<svg class="i" style="left:1026px;top:117px" width="16" height="16" viewBox="0 0 16 16"><path d="M0.500 2.500q0-1 1-1h4l1.500 1.500h7.500q1 0 1 1v9.500q0 1-1 1h-13q-1 0-1-1z" fill="#f8dc50" stroke="#d0a820"/><path d="M1 5.500h14v2h-14z" fill="#fdf0a0"/><path d="M1 3.500h5.500" stroke="#fdf0a0"/><path d="M6.500 6.500l3.500 6" stroke="#222" stroke-width="1.800"/></svg>
<svg class="i" style="left:1049px;top:117px" width="16" height="16" viewBox="0 0 16 16"><path d="M3 8v7.500h10v-7.500l-5-5z" fill="#d4e4fc" stroke="#5a6c90" stroke-width="1"/><rect x="6.500" y="9.500" width="3" height="6" fill="#3468c8"/><path d="M0.800 8.200l7.200-7 7.200 7" fill="none" stroke="#3c4c68" stroke-width="1.800" stroke-linejoin="miter"/></svg>
<svg class="i" style="left:1072px;top:117px" width="16" height="16" viewBox="0 0 16 16"><path d="M1 7.500v-3.500q0-3 3-3h6.500v-1l4.500 3.500-4.500 3.500v-2h-5q-1 0-1 1v1.500z" fill="#44b844" stroke="#288828" stroke-width="0.700"/><path d="M15 8.500v3.500q0 3-3 3h-6.500v1l-4.500-3.500 4.500-3.500v2h5q1 0 1-1v-1.500z" fill="#44b844" stroke="#288828" stroke-width="0.700"/></svg>
<div class="sep" style="left:1094px;top:113px;width:2px;height:24px;"></div>
<svg class="i" style="left:1100px;top:117px" width="16" height="16" viewBox="0 0 16 16"><rect x="0.500" y="0.500" width="7" height="6" fill="#f8e060" stroke="#c9a018"/><rect x="8.500" y="9.500" width="7" height="6" fill="#f8e060" stroke="#c9a018"/><path d="M3.500 8v4.500h4" fill="none" stroke="#444" stroke-dasharray="1 1"/></svg>
<div class="band" style="left:642px;top:140px;width:343px;height:26px;"></div>
<div class="grip" style="left:645px;top:142px;width:3px;height:22px;"></div>
<svg class="i" style="left:653px;top:145px" width="16" height="16" viewBox="0 0 16 16"><rect x="0.500" y="4.500" width="8" height="11" fill="#f8fbff" stroke="#6474a0"/><path d="M2 7.500h2.500M2 9.500h5M2 11.500h5M2 13.500h5" stroke="#5870c8"/><path d="M6.500 0.500h6l3 3v11h-9z" fill="#fbfcff" stroke="#7c84ac"/><path d="M8.500 3.500h2.500M8.500 5.500h5" stroke="#6474b4"/><path d="M7 7.500h8.500v7h-5l-3.500 1z" fill="#3c6cd8"/><path d="M15 8v5.500l-1.800-1.800-3.700 3.800-1.500-1.500 3.700-3.800-1.700-1.700z" fill="#8cbcff" stroke="#b8d8ff" stroke-width="0.400"/></svg>
<span class="t" style="left:673px;top:146px;letter-spacing:-0.26px;">Upload</span>
<svg class="i" style="left:722px;top:145px" width="16" height="16" viewBox="0 0 16 16"><rect x="0.500" y="4.500" width="8" height="11" fill="#f8fbff" stroke="#6474a0"/><path d="M2 7.500h2.500M2 9.500h5M2 11.500h5M2 13.500h5" stroke="#5870c8"/><path d="M6.500 0.500h6l3 3v11h-9z" fill="#fbfcff" stroke="#7c84ac"/><path d="M8.500 3.500h2.500M8.500 5.500h5" stroke="#6474b4"/><path d="M7 7.500h8.500v7h-5l-3.500 1z" fill="#3c6cd8"/><path d="M15 8v5.500l-1.800-1.800-3.700 3.800-1.500-1.500 3.700-3.800-1.700-1.700z" fill="#8cbcff" stroke="#b8d8ff" stroke-width="0.400"/></svg>
<div class="sep" style="left:745px;top:142px;width:2px;height:22px;"></div>
<svg class="i" style="left:751px;top:145px" width="16" height="16" viewBox="0 0 16 16"><path d="M0.500 2.500h10v13h-10z" fill="#f4f8ff" stroke="#7a9cd0"/><path d="M13.500 0.500l2 2-8 9.500-3 1.500 1-3.500z" fill="#f0b840" stroke="#a87820" stroke-width="0.700"/><path d="M13.500 0.500l2 2-1.300 1.500-2-2z" fill="#e05050"/><path d="M4.500 13.500l1-3 2 1.500z" fill="#f8e0b0"/></svg>
<span class="t" style="left:770.6px;top:146px;letter-spacing:0.16px;">Edit</span>
<svg class="i" style="left:801px;top:146px" width="16" height="15" viewBox="0 0 16 15"><path d="M2 1l6 5 6-5 1.500 2-5 5 5 5-2 2-5.500-5-5.500 5-2-2 5-5-5-5z" fill="#e02020" stroke="#a81010" stroke-width="0.600"/></svg>
<svg class="i" style="left:824px;top:145px" width="16" height="16" viewBox="0 0 16 16"><rect x="0.500" y="9.500" width="15" height="6" fill="#f4f8ff" stroke="#4a74b8"/><path d="M2.500 11l3 3M5.500 11l-3 3" stroke="#3a5aa0"/><path d="M13 0l2.500 2-6 8.500-3 1.500 0.500-3.500z" fill="#f0b840" stroke="#a87820" stroke-width="0.700"/><path d="M13 0l2.500 2-1.200 1.600-2.500-2z" fill="#e05050"/></svg>
<svg class="i" style="left:847px;top:145px" width="16" height="16" viewBox="0 0 16 16"><path d="M0.500 0.500h7l3 3v10h-10z" fill="#f8fbff" stroke="#9ab0d0"/><path d="M7.500 0.500v3h3" fill="none" stroke="#9ab0d0"/><rect x="7.500" y="8.500" width="8" height="7" fill="#f4f8ff" stroke="#7a90b0"/><path d="M9 12l2 2 3.500-4" fill="none" stroke="#30a030" stroke-width="1.500"/></svg>
<span class="t" style="left:866.2px;top:146px;letter-spacing:-0.04px;">Properties</span>
<div class="sep" style="left:934px;top:142px;width:2px;height:22px;"></div>
<svg class="i" style="left:940px;top:145px" width="16" height="16" viewBox="0 0 16 16"><path d="M0.500 3.500h5l1 1.500h8v10h-14z" fill="#f8d848" stroke="#c9a018"/><rect x="1" y="7" width="13" height="1" fill="#fff0a0"/><circle cx="12.500" cy="3.500" r="2.800" fill="#fff" stroke="#b8ccec" stroke-width="1.200"/></svg>
<svg class="i" style="left:964px;top:145px" width="16" height="16" viewBox="0 0 16 16"><path d="M0.500 0.500h7l3 3v10h-10z" fill="#f8fbff" stroke="#9ab0d0"/><rect x="6.500" y="7.500" width="9" height="8" fill="#e8f0fc" stroke="#3a5488"/><path d="M8.500 9.500h2l3 3v-2.500h0v4.500h-4.500l2.500 0-3-3z" fill="#2a3c70" stroke="#2a3c70"/></svg>
<div class="band" style="left:986px;top:140px;width:79px;height:26px;"></div>
<div class="grip" style="left:989px;top:142px;width:3px;height:22px;"></div>
<svg class="i" style="left:998px;top:146px" width="14" height="14" viewBox="0 0 14 14"><rect x="0.500" y="0.500" width="13" height="13" fill="#e6f0fe" stroke="#6878a8"/><path d="M3 7h8M7 3v8" stroke="#2c4890" stroke-width="2"/></svg>
<svg class="i" style="left:1021px;top:146px" width="14" height="14" viewBox="0 0 14 14"><rect x="0.500" y="0.500" width="13" height="13" fill="#e6f0fe" stroke="#6878a8"/><path d="M3 7h8" stroke="#2c4890" stroke-width="2"/></svg>
<svg class="i" style="left:1044px;top:146px" width="14" height="14" viewBox="0 0 14 14"><rect x="0.500" y="0.500" width="13" height="13" fill="#e6f0fe" stroke="#6878a8"/><path d="M3 3l4 8.500 4-8.500M4.500 6.500h5" fill="none" stroke="#44588c" stroke-width="1.600"/></svg>
<div class="path" style="left:6px;top:167px;width:630px;height:24px;"></div>
<span class="t pt" style="left:11px;top:171px;letter-spacing:0.02px;">/src/dartload/plans/sasautos</span>
<div class="path" style="left:643px;top:167px;width:784px;height:24px;"></div>
<span class="t pt" style="left:646.5px;top:171px;letter-spacing:0.07px;">K:\dartload\e2p\plans\sasautos</span>
<div class="sunk" style="left:6px;top:190px;width:630px;height:374px;"></div>
<div class="sunk2" style="left:7px;top:191px;width:628px;height:372px;background:#fff"></div>
<div class="hdr" style="left:8px;top:192px;width:240px;height:23px;"><div></div></div>
<span class="t" style="left:13.4px;top:196px;letter-spacing:-0.21px;">Name</span>
<div class="hdr" style="left:248px;top:192px;width:53px;height:23px;"><div></div></div>
<span class="t" style="left:248px;top:196px;width:46.5px;text-align:right;letter-spacing:-0.65px;margin-right:--0.65px">Size</span>
<div class="hdr" style="left:301px;top:192px;width:188px;height:23px;"><div></div></div>
<span class="t" style="left:306.7px;top:196px;letter-spacing:0.09px;">Changed</span>
<div class="hdr" style="left:489px;top:192px;width:99px;height:23px;"><div></div></div>
<span class="t" style="left:494.3px;top:196px;letter-spacing:-0.06px;">Rights</span>
<div class="hdr" style="left:588px;top:192px;width:46px;height:23px;"><div></div></div>
<span class="t" style="left:593.7px;top:196px;">Ow</span>
<div style="left:8px;top:215px;width:606px;height:328px;overflow:hidden">
<svg class="i" style="left:6px;top:2px" width="16" height="18" viewBox="0 0 16 18"><path d="M0.500 0.500h10.500l3.500 3.500v13h-14z" fill="#fff" stroke="#c4c6d8"/><path d="M11 0.500v3.500h3.500" fill="#eef0f8" stroke="#c4c6d8"/><rect x="3" y="3" width="10" height="10" fill="#0c2c74"/><rect x="3" y="3" width="10" height="1.500" fill="#14409c"/><path d="M5 5h5.500l2.500-1v5l-3 1.500h-5z" fill="#9cd0f4"/><path d="M6.500 5h4l2.500-1.500v3l-3 2z" fill="#e4f4ff"/><path d="M4.500 6.500h3.500v1.200h-2v1.300h2.500v1.200h-4z" fill="#0c2c74"/><path d="M8 8.500q2 2 5 0.500v1.500q-3 1.200-5-0.500z" fill="#e89030"/><rect x="4.500" y="10.500" width="6" height="1" fill="#e8f0fc"/><rect x="3" y="12" width="10" height="1" fill="#081c4c"/></svg>
<span class="t" style="left:25.8px;top:3px;letter-spacing:-0.17px;">dartspec.sas</span>
<span class="t" style="left:230px;top:3px;width:56.73px;text-align:right;letter-spacing:0.23px">4,715</span>
<span class="t" style="left:298.7px;top:3px;letter-spacing:0.39px;">1/31/2014 9:14:10 PM</span>
<span class="t" style="left:486.3px;top:3px;letter-spacing:0.45px;">rwxrwxr--</span>
<span class="t" style="left:585.7px;top:3px;letter-spacing:0.3px;">vault</span>
<svg class="i" style="left:6px;top:23px" width="16" height="18" viewBox="0 0 16 18"><path d="M0.500 0.500h10.500l3.500 3.500v13h-14z" fill="#fff" stroke="#c4c6d8"/><path d="M11 0.500v3.500h3.500" fill="#eef0f8" stroke="#c4c6d8"/><rect x="3" y="3" width="10" height="10" fill="#0c2c74"/><rect x="3" y="3" width="10" height="1.500" fill="#14409c"/><path d="M5 5h5.500l2.500-1v5l-3 1.500h-5z" fill="#9cd0f4"/><path d="M6.500 5h4l2.500-1.500v3l-3 2z" fill="#e4f4ff"/><path d="M4.500 6.500h3.500v1.200h-2v1.300h2.500v1.200h-4z" fill="#0c2c74"/><path d="M8 8.500q2 2 5 0.500v1.500q-3 1.200-5-0.500z" fill="#e89030"/><rect x="4.500" y="10.500" width="6" height="1" fill="#e8f0fc"/><rect x="3" y="12" width="10" height="1" fill="#081c4c"/></svg>
<span class="t" style="left:25.8px;top:24px;letter-spacing:-0.09px;">dartspec_bhiclms.sas</span>
<span class="t" style="left:230px;top:24px;width:56.73px;text-align:right;letter-spacing:0.23px">3,690</span>
<span class="t" style="left:298.7px;top:24px;letter-spacing:0.39px;">4/4/2012 8:06:11 AM</span>
<span class="t" style="left:486.3px;top:24px;letter-spacing:0.45px;">rwxrwxr--</span>
<span class="t" style="left:585.7px;top:24px;letter-spacing:0.3px;">vault</span>
<svg class="i" style="left:6px;top:44px" width="16" height="18" viewBox="0 0 16 18"><path d="M0.500 0.500h10.500l3.500 3.500v13h-14z" fill="#fff" stroke="#c4c6d8"/><path d="M11 0.500v3.500h3.500" fill="#eef0f8" stroke="#c4c6d8"/><rect x="3" y="3" width="10" height="10" fill="#0c2c74"/><rect x="3" y="3" width="10" height="1.500" fill="#14409c"/><path d="M5 5h5.500l2.500-1v5l-3 1.500h-5z" fill="#9cd0f4"/><path d="M6.500 5h4l2.500-1.500v3l-3 2z" fill="#e4f4ff"/><path d="M4.500 6.500h3.500v1.200h-2v1.300h2.500v1.200h-4z" fill="#0c2c74"/><path d="M8 8.500q2 2 5 0.500v1.500q-3 1.200-5-0.500z" fill="#e89030"/><rect x="4.500" y="10.500" width="6" height="1" fill="#e8f0fc"/><rect x="3" y="12" width="10" height="1" fill="#081c4c"/></svg>
<span class="t" style="left:25.8px;top:45px;">dartspec_bhimm.sas</span>
<span class="t" style="left:230px;top:45px;width:56.73px;text-align:right;letter-spacing:0.23px">2,451</span>
<span class="t" style="left:298.7px;top:45px;letter-spacing:0.39px;">4/4/2012 8:06:36 AM</span>
<span class="t" style="left:486.3px;top:45px;letter-spacing:0.45px;">rwxrwxr--</span>
<span class="t" style="left:585.7px;top:45px;letter-spacing:0.3px;">vault</span>
<svg class="i" style="left:6px;top:65px" width="16" height="18" viewBox="0 0 16 18"><path d="M0.500 0.500h10.500l3.500 3.500v13h-14z" fill="#fff" stroke="#c4c6d8"/><path d="M11 0.500v3.500h3.500" fill="#eef0f8" stroke="#c4c6d8"/><rect x="3" y="3" width="10" height="10" fill="#0c2c74"/><rect x="3" y="3" width="10" height="1.500" fill="#14409c"/><path d="M5 5h5.500l2.500-1v5l-3 1.500h-5z" fill="#9cd0f4"/><path d="M6.500 5h4l2.500-1.500v3l-3 2z" fill="#e4f4ff"/><path d="M4.500 6.500h3.500v1.200h-2v1.300h2.500v1.200h-4z" fill="#0c2c74"/><path d="M8 8.500q2 2 5 0.500v1.500q-3 1.200-5-0.500z" fill="#e89030"/><rect x="4.500" y="10.500" width="6" height="1" fill="#e8f0fc"/><rect x="3" y="12" width="10" height="1" fill="#081c4c"/></svg>
<span class="t" style="left:25.8px;top:66px;letter-spacing:-0.06px;">dartspec_clag.sas</span>
<span class="t" style="left:230px;top:66px;width:56.73px;text-align:right;letter-spacing:0.23px">15,8...</span>
<span class="t" style="left:298.7px;top:66px;letter-spacing:0.39px;">4/2/2016 3:10:05 PM</span>
<span class="t" style="left:486.3px;top:66px;letter-spacing:0.45px;">rwxrwxr--</span>
<span class="t" style="left:585.7px;top:66px;letter-spacing:0.3px;">vault</span>
<svg class="i" style="left:6px;top:86px" width="16" height="18" viewBox="0 0 16 18"><path d="M0.500 0.500h10.500l3.500 3.500v13h-14z" fill="#fff" stroke="#c4c6d8"/><path d="M11 0.500v3.500h3.500" fill="#eef0f8" stroke="#c4c6d8"/><rect x="3" y="3" width="10" height="10" fill="#0c2c74"/><rect x="3" y="3" width="10" height="1.500" fill="#14409c"/><path d="M5 5h5.500l2.500-1v5l-3 1.500h-5z" fill="#9cd0f4"/><path d="M6.500 5h4l2.500-1.500v3l-3 2z" fill="#e4f4ff"/><path d="M4.500 6.500h3.500v1.200h-2v1.300h2.500v1.200h-4z" fill="#0c2c74"/><path d="M8 8.500q2 2 5 0.500v1.500q-3 1.200-5-0.500z" fill="#e89030"/><rect x="4.500" y="10.500" width="6" height="1" fill="#e8f0fc"/><rect x="3" y="12" width="10" height="1" fill="#081c4c"/></svg>
<span class="t" style="left:25.8px;top:87px;letter-spacing:-0.14px;">dartspec_claim.sas</span>
<span class="t" style="left:230px;top:87px;width:56.73px;text-align:right;letter-spacing:0.23px">2,438</span>
<span class="t" style="left:298.7px;top:87px;letter-spacing:0.39px;">1/22/2014 9:34:33 AM</span>
<span class="t" style="left:486.3px;top:87px;letter-spacing:0.45px;">rwxrwxr--</span>
<span class="t" style="left:585.7px;top:87px;letter-spacing:0.3px;">vault</span>
<svg class="i" style="left:6px;top:107px" width="16" height="18" viewBox="0 0 16 18"><path d="M0.500 0.500h10.500l3.500 3.500v13h-14z" fill="#fff" stroke="#c4c6d8"/><path d="M11 0.500v3.500h3.500" fill="#eef0f8" stroke="#c4c6d8"/><rect x="3" y="3" width="10" height="10" fill="#0c2c74"/><rect x="3" y="3" width="10" height="1.500" fill="#14409c"/><path d="M5 5h5.500l2.500-1v5l-3 1.500h-5z" fill="#9cd0f4"/><path d="M6.500 5h4l2.500-1.500v3l-3 2z" fill="#e4f4ff"/><path d="M4.500 6.500h3.500v1.200h-2v1.300h2.500v1.200h-4z" fill="#0c2c74"/><path d="M8 8.500q2 2 5 0.500v1.500q-3 1.200-5-0.500z" fill="#e89030"/><rect x="4.500" y="10.500" width="6" height="1" fill="#e8f0fc"/><rect x="3" y="12" width="10" height="1" fill="#081c4c"/></svg>
<span class="t" style="left:25.8px;top:108px;letter-spacing:0.06px;">dartspec_cp.sas</span>
<span class="t" style="left:230px;top:108px;width:56.73px;text-align:right;letter-spacing:0.23px">629</span>
<span class="t" style="left:298.7px;top:108px;letter-spacing:0.39px;">4/2/2016 3:10:05 PM</span>
<span class="t" style="left:486.3px;top:108px;letter-spacing:0.45px;">rwxrwxr--</span>
<span class="t" style="left:585.7px;top:108px;letter-spacing:0.3px;">vault</span>
<svg class="i" style="left:6px;top:128px" width="16" height="18" viewBox="0 0 16 18"><path d="M0.500 0.500h10.500l3.500 3.500v13h-14z" fill="#fff" stroke="#c4c6d8"/><path d="M11 0.500v3.500h3.500" fill="#eef0f8" stroke="#c4c6d8"/><rect x="3" y="3" width="10" height="10" fill="#0c2c74"/><rect x="3" y="3" width="10" height="1.500" fill="#14409c"/><path d="M5 5h5.500l2.500-1v5l-3 1.500h-5z" fill="#9cd0f4"/><path d="M6.500 5h4l2.500-1.500v3l-3 2z" fill="#e4f4ff"/><path d="M4.500 6.500h3.500v1.200h-2v1.300h2.500v1.200h-4z" fill="#0c2c74"/><path d="M8 8.500q2 2 5 0.500v1.500q-3 1.200-5-0.500z" fill="#e89030"/><rect x="4.500" y="10.500" width="6" height="1" fill="#e8f0fc"/><rect x="3" y="12" width="10" height="1" fill="#081c4c"/></svg>
<span class="t" style="left:25.8px;top:129px;letter-spacing:0.09px;">dartspec_de_vi.sas</span>
<span class="t" style="left:230px;top:129px;width:56.73px;text-align:right;letter-spacing:0.23px">953</span>
<span class="t" style="left:298.7px;top:129px;letter-spacing:0.39px;">4/2/2016 3:10:05 PM</span>
<span class="t" style="left:486.3px;top:129px;letter-spacing:0.45px;">rwxrwxr--</span>
<span class="t" style="left:585.7px;top:129px;letter-spacing:0.3px;">vault</span>
<svg class="i" style="left:6px;top:149px" width="16" height="18" viewBox="0 0 16 18"><path d="M0.500 0.500h10.500l3.500 3.500v13h-14z" fill="#fff" stroke="#c4c6d8"/><path d="M11 0.500v3.500h3.500" fill="#eef0f8" stroke="#c4c6d8"/><rect x="3" y="3" width="10" height="10" fill="#0c2c74"/><rect x="3" y="3" width="10" height="1.500" fill="#14409c"/><path d="M5 5h5.500l2.500-1v5l-3 1.500h-5z" fill="#9cd0f4"/><path d="M6.500 5h4l2.500-1.500v3l-3 2z" fill="#e4f4ff"/><path d="M4.500 6.500h3.500v1.200h-2v1.300h2.500v1.200h-4z" fill="#0c2c74"/><path d="M8 8.500q2 2 5 0.500v1.500q-3 1.200-5-0.500z" fill="#e89030"/><rect x="4.500" y="10.500" width="6" height="1" fill="#e8f0fc"/><rect x="3" y="12" width="10" height="1" fill="#081c4c"/></svg>
<span class="t" style="left:25.8px;top:150px;letter-spacing:-0.06px;">dartspec_di.sas</span>
<span class="t" style="left:230px;top:150px;width:56.73px;text-align:right;letter-spacing:0.23px">453</span>
<span class="t" style="left:298.7px;top:150px;letter-spacing:0.39px;">2/23/2007 9:16:25 AM</span>
<span class="t" style="left:486.3px;top:150px;letter-spacing:0.45px;">rwxrwxr--</span>
<span class="t" style="left:585.7px;top:150px;letter-spacing:0.3px;">vault</span>
<svg class="i" style="left:6px;top:170px" width="16" height="18" viewBox="0 0 16 18"><path d="M0.500 0.500h10.500l3.500 3.500v13h-14z" fill="#fff" stroke="#c4c6d8"/><path d="M11 0.500v3.500h3.500" fill="#eef0f8" stroke="#c4c6d8"/><rect x="3" y="3" width="10" height="10" fill="#0c2c74"/><rect x="3" y="3" width="10" height="1.500" fill="#14409c"/><path d="M5 5h5.500l2.500-1v5l-3 1.500h-5z" fill="#9cd0f4"/><path d="M6.500 5h4l2.500-1.500v3l-3 2z" fill="#e4f4ff"/><path d="M4.500 6.500h3.500v1.200h-2v1.300h2.500v1.200h-4z" fill="#0c2c74"/><path d="M8 8.500q2 2 5 0.500v1.500q-3 1.200-5-0.500z" fill="#e89030"/><rect x="4.500" y="10.500" width="6" height="1" fill="#e8f0fc"/><rect x="3" y="12" width="10" height="1" fill="#081c4c"/></svg>
<span class="t" style="left:25.8px;top:171px;letter-spacing:-0.06px;">dartspec_ip.sas</span>
<span class="t" style="left:230px;top:171px;width:56.73px;text-align:right;letter-spacing:0.23px">3,214</span>
<span class="t" style="left:298.7px;top:171px;letter-spacing:0.39px;">6/23/2016 3:02:40 PM</span>
<span class="t" style="left:486.3px;top:171px;letter-spacing:0.45px;">rwxrwxr--</span>
<span class="t" style="left:585.7px;top:171px;letter-spacing:0.3px;">vault</span>
<svg class="i" style="left:6px;top:191px" width="16" height="18" viewBox="0 0 16 18"><path d="M0.500 0.500h10.500l3.500 3.500v13h-14z" fill="#fff" stroke="#c4c6d8"/><path d="M11 0.500v3.500h3.500" fill="#eef0f8" stroke="#c4c6d8"/><rect x="3" y="3" width="10" height="10" fill="#0c2c74"/><rect x="3" y="3" width="10" height="1.500" fill="#14409c"/><path d="M5 5h5.500l2.500-1v5l-3 1.500h-5z" fill="#9cd0f4"/><path d="M6.500 5h4l2.500-1.500v3l-3 2z" fill="#e4f4ff"/><path d="M4.500 6.500h3.500v1.200h-2v1.300h2.500v1.200h-4z" fill="#0c2c74"/><path d="M8 8.500q2 2 5 0.500v1.500q-3 1.200-5-0.500z" fill="#e89030"/><rect x="4.500" y="10.500" width="6" height="1" fill="#e8f0fc"/><rect x="3" y="12" width="10" height="1" fill="#081c4c"/></svg>
<span class="t" style="left:25.8px;top:192px;letter-spacing:-0.04px;">dartspec_ipdet.sas</span>
<span class="t" style="left:230px;top:192px;width:56.73px;text-align:right;letter-spacing:0.23px">5,374</span>
<span class="t" style="left:298.7px;top:192px;letter-spacing:0.39px;">4/2/2016 3:10:05 PM</span>
<span class="t" style="left:486.3px;top:192px;letter-spacing:0.45px;">rwxrwxr--</span>
<span class="t" style="left:585.7px;top:192px;letter-spacing:0.3px;">vault</span>
<svg class="i" style="left:6px;top:212px" width="16" height="18" viewBox="0 0 16 18"><path d="M0.500 0.500h10.500l3.500 3.500v13h-14z" fill="#fff" stroke="#c4c6d8"/><path d="M11 0.500v3.500h3.500" fill="#eef0f8" stroke="#c4c6d8"/><rect x="3" y="3" width="10" height="10" fill="#0c2c74"/><rect x="3" y="3" width="10" height="1.500" fill="#14409c"/><path d="M5 5h5.500l2.500-1v5l-3 1.500h-5z" fill="#9cd0f4"/><path d="M6.500 5h4l2.500-1.500v3l-3 2z" fill="#e4f4ff"/><path d="M4.500 6.500h3.500v1.200h-2v1.300h2.500v1.200h-4z" fill="#0c2c74"/><path d="M8 8.500q2 2 5 0.500v1.500q-3 1.200-5-0.500z" fill="#e89030"/><rect x="4.500" y="10.500" width="6" height="1" fill="#e8f0fc"/><rect x="3" y="12" width="10" height="1" fill="#081c4c"/></svg>
<span class="t" style="left:25.8px;top:213px;letter-spacing:0.02px;">dartspec_med.sas</span>
<span class="t" style="left:230px;top:213px;width:56.73px;text-align:right;letter-spacing:0.23px">1,651</span>
<span class="t" style="left:298.7px;top:213px;letter-spacing:0.39px;">6/23/2016 3:04:00 PM</span>
<span class="t" style="left:486.3px;top:213px;letter-spacing:0.45px;">rwxrwxr--</span>
<span class="t" style="left:585.7px;top:213px;letter-spacing:0.3px;">vault</span>
<div class="sel" style="left:24px;top:231px;width:582px;height:21px;"></div>
<svg class="i" style="left:6px;top:233px" width="16" height="18" viewBox="0 0 16 18"><path d="M0.500 0.500h10.500l3.500 3.500v13h-14z" fill="#c0c4dc" stroke="#c4c6d8"/><path d="M11 0.500v3.500h3.500" fill="#b0b4d0" stroke="#c4c6d8"/><rect x="3" y="3" width="10" height="10" fill="#0c2c74"/><rect x="3" y="3" width="10" height="1.500" fill="#14409c"/><path d="M5 5h5.500l2.500-1v5l-3 1.500h-5z" fill="#9cd0f4"/><path d="M6.500 5h4l2.500-1.500v3l-3 2z" fill="#e4f4ff"/><path d="M4.500 6.500h3.500v1.200h-2v1.300h2.500v1.200h-4z" fill="#0c2c74"/><path d="M8 8.500q2 2 5 0.500v1.500q-3 1.200-5-0.500z" fill="#e89030"/><rect x="4.500" y="10.500" width="6" height="1" fill="#e8f0fc"/><rect x="3" y="12" width="10" height="1" fill="#081c4c"/></svg>
<span class="t" style="left:25.8px;top:234px;letter-spacing:0.1px;">dartspec_medrx.sas</span>
<span class="t" style="left:230px;top:234px;width:56.73px;text-align:right;letter-spacing:0.23px">419</span>
<span class="t" style="left:298.7px;top:234px;letter-spacing:0.39px;">5/3/2013 5:19:36 PM</span>
<span class="t" style="left:486.3px;top:234px;letter-spacing:0.45px;">rwxrwxr--</span>
<span class="t" style="left:585.7px;top:234px;letter-spacing:0.3px;">vault</span>
<svg class="i" style="left:6px;top:254px" width="16" height="18" viewBox="0 0 16 18"><path d="M0.500 0.500h10.500l3.500 3.500v13h-14z" fill="#fff" stroke="#c4c6d8"/><path d="M11 0.500v3.500h3.500" fill="#eef0f8" stroke="#c4c6d8"/><rect x="3" y="3" width="10" height="10" fill="#0c2c74"/><rect x="3" y="3" width="10" height="1.500" fill="#14409c"/><path d="M5 5h5.500l2.500-1v5l-3 1.500h-5z" fill="#9cd0f4"/><path d="M6.500 5h4l2.500-1.500v3l-3 2z" fill="#e4f4ff"/><path d="M4.500 6.500h3.500v1.200h-2v1.300h2.500v1.200h-4z" fill="#0c2c74"/><path d="M8 8.500q2 2 5 0.500v1.500q-3 1.200-5-0.500z" fill="#e89030"/><rect x="4.500" y="10.500" width="6" height="1" fill="#e8f0fc"/><rect x="3" y="12" width="10" height="1" fill="#081c4c"/></svg>
<span class="t" style="left:25.8px;top:255px;letter-spacing:-0.02px;">dartspec_mem.sas</span>
<span class="t" style="left:230px;top:255px;width:56.73px;text-align:right;letter-spacing:0.23px">13,0...</span>
<span class="t" style="left:298.7px;top:255px;letter-spacing:0.39px;">6/23/2016 3:04:44 PM</span>
<span class="t" style="left:486.3px;top:255px;letter-spacing:0.45px;">rwxrwxr--</span>
<span class="t" style="left:585.7px;top:255px;letter-spacing:0.3px;">vault</span>
<svg class="i" style="left:6px;top:275px" width="16" height="18" viewBox="0 0 16 18"><path d="M0.500 0.500h10.500l3.500 3.500v13h-14z" fill="#fff" stroke="#c4c6d8"/><path d="M11 0.500v3.500h3.500" fill="#eef0f8" stroke="#c4c6d8"/><rect x="3" y="3" width="10" height="10" fill="#0c2c74"/><rect x="3" y="3" width="10" height="1.500" fill="#14409c"/><path d="M5 5h5.500l2.500-1v5l-3 1.500h-5z" fill="#9cd0f4"/><path d="M6.500 5h4l2.500-1.500v3l-3 2z" fill="#e4f4ff"/><path d="M4.500 6.500h3.500v1.200h-2v1.300h2.500v1.200h-4z" fill="#0c2c74"/><path d="M8 8.500q2 2 5 0.500v1.500q-3 1.200-5-0.500z" fill="#e89030"/><rect x="4.500" y="10.500" width="6" height="1" fill="#e8f0fc"/><rect x="3" y="12" width="10" height="1" fill="#081c4c"/></svg>
<span class="t" style="left:25.8px;top:276px;letter-spacing:0.13px;">dartspec_mhpnorm.sas</span>
<span class="t" style="left:230px;top:276px;width:56.73px;text-align:right;letter-spacing:0.23px">484</span>
<span class="t" style="left:298.7px;top:276px;letter-spacing:0.39px;">4/4/2012 8:07:38 AM</span>
<span class="t" style="left:486.3px;top:276px;letter-spacing:0.45px;">rwxrwxr--</span>
<span class="t" style="left:585.7px;top:276px;letter-spacing:0.3px;">vault</span>
<svg class="i" style="left:6px;top:296px" width="16" height="18" viewBox="0 0 16 18"><path d="M0.500 0.500h10.500l3.500 3.500v13h-14z" fill="#fff" stroke="#c4c6d8"/><path d="M11 0.500v3.500h3.500" fill="#eef0f8" stroke="#c4c6d8"/><rect x="3" y="3" width="10" height="10" fill="#0c2c74"/><rect x="3" y="3" width="10" height="1.500" fill="#14409c"/><path d="M5 5h5.500l2.500-1v5l-3 1.500h-5z" fill="#9cd0f4"/><path d="M6.500 5h4l2.500-1.500v3l-3 2z" fill="#e4f4ff"/><path d="M4.500 6.500h3.500v1.200h-2v1.300h2.500v1.200h-4z" fill="#0c2c74"/><path d="M8 8.500q2 2 5 0.500v1.500q-3 1.200-5-0.500z" fill="#e89030"/><rect x="4.500" y="10.500" width="6" height="1" fill="#e8f0fc"/><rect x="3" y="12" width="10" height="1" fill="#081c4c"/></svg>
<span class="t" style="left:25.8px;top:297px;">dartspec_mhppri.sas</span>
<span class="t" style="left:230px;top:297px;width:56.73px;text-align:right;letter-spacing:0.23px">920</span>
<span class="t" style="left:298.7px;top:297px;letter-spacing:0.39px;">4/4/2012 8:08:03 AM</span>
<span class="t" style="left:486.3px;top:297px;letter-spacing:0.45px;">rwxrwxr--</span>
<span class="t" style="left:585.7px;top:297px;letter-spacing:0.3px;">vault</span>
<svg class="i" style="left:6px;top:317px" width="16" height="18" viewBox="0 0 16 18"><path d="M0.500 0.500h10.500l3.500 3.500v13h-14z" fill="#fff" stroke="#c4c6d8"/><path d="M11 0.500v3.500h3.500" fill="#eef0f8" stroke="#c4c6d8"/><rect x="3" y="3" width="10" height="10" fill="#0c2c74"/><rect x="3" y="3" width="10" height="1.500" fill="#14409c"/><path d="M5 5h5.500l2.500-1v5l-3 1.500h-5z" fill="#9cd0f4"/><path d="M6.500 5h4l2.500-1.500v3l-3 2z" fill="#e4f4ff"/><path d="M4.500 6.500h3.500v1.200h-2v1.300h2.500v1.200h-4z" fill="#0c2c74"/><path d="M8 8.500q2 2 5 0.500v1.500q-3 1.200-5-0.500z" fill="#e89030"/><rect x="4.500" y="10.500" width="6" height="1" fill="#e8f0fc"/><rect x="3" y="12" width="10" height="1" fill="#081c4c"/></svg>
<span class="t" style="left:25.8px;top:318px;letter-spacing:0.01px;">dartspec_mhpsec.sas</span>
<span class="t" style="left:230px;top:318px;width:56.73px;text-align:right;letter-spacing:0.23px">643</span>
<span class="t" style="left:298.7px;top:318px;letter-spacing:0.39px;">4/4/2012 8:08:22 AM</span>
<span class="t" style="left:486.3px;top:318px;letter-spacing:0.45px;">rwxrwxr--</span>
<span class="t" style="left:585.7px;top:318px;letter-spacing:0.3px;">vault</span>
</div>
<div class="track" style="left:614px;top:192px;width:19px;height:351px;"></div>
<div class="btn" style="left:614px;top:192px;width:19px;height:19px;"><div></div></div>
<svg class="i" style="left:619px;top:198px" width="9" height="5" viewBox="0 0 9 5"><path d="M0 5h9L4.500 0z"/></svg>
<div class="btn" style="left:614px;top:524px;width:19px;height:19px;"><div></div></div>
<svg class="i" style="left:619px;top:531px" width="9" height="5" viewBox="0 0 9 5"><path d="M0 0h9L4.500 5z"/></svg>
<div class="btn" style="left:614px;top:423px;width:19px;height:32px;"><div></div></div>
<div class="track" style="left:8px;top:543px;width:606px;height:19px;"></div>
<div class="btn" style="left:8px;top:543px;width:19px;height:19px;"><div></div></div>
<svg class="i" style="left:14px;top:548px" width="5" height="9" viewBox="0 0 5 9"><path d="M5 0v9L0 4.500z"/></svg>
<div class="btn" style="left:595px;top:543px;width:19px;height:19px;"><div></div></div>
<svg class="i" style="left:603px;top:548px" width="5" height="9" viewBox="0 0 5 9"><path d="M0 0v9L5 4.500z"/></svg>
<div class="btn" style="left:27px;top:543px;width:478px;height:19px;"><div></div></div>
<div style="left:614px;top:543px;width:20px;height:19px;background:#d4d0c8"></div>
<div class="sunk" style="left:643px;top:190px;width:784px;height:398px;"></div>
<div class="sunk2" style="left:644px;top:191px;width:782px;height:396px;background:#fff"></div>
<div class="hdr" style="left:645px;top:192px;width:563px;height:23px;"><div></div></div>
<span class="t" style="left:649.3px;top:196px;letter-spacing:-0.21px;">Name</span>
<div class="hdr" style="left:1208px;top:192px;width:189px;height:23px;"><div></div></div>
<span class="t" style="left:1214px;top:196px;letter-spacing:0.09px;">Changed</span>
<div class="hdr" style="left:1397px;top:192px;width:28px;height:23px;"><div></div></div>
<svg class="i" style="left:694px;top:200px" width="9" height="5" viewBox="0 0 9 5"><path d="M0 5h9L4.500 0z" fill="#a0a0a0"/></svg>
<div style="left:645px;top:215px;width:760px;height:352px;overflow:hidden">
<svg class="i" style="left:6px;top:2px" width="16" height="18" viewBox="0 0 16 18"><path d="M0.500 0.500h10.500l3.500 3.500v13h-14z" fill="#fff" stroke="#c4c6d8"/><path d="M11 0.500v3.500h3.500" fill="#eef0f8" stroke="#c4c6d8"/><rect x="3" y="3" width="10" height="10" fill="#0c2c74"/><rect x="3" y="3" width="10" height="1.500" fill="#14409c"/><path d="M5 5h5.500l2.500-1v5l-3 1.500h-5z" fill="#9cd0f4"/><path d="M6.500 5h4l2.500-1.500v3l-3 2z" fill="#e4f4ff"/><path d="M4.500 6.500h3.500v1.200h-2v1.300h2.500v1.200h-4z" fill="#0c2c74"/><path d="M8 8.500q2 2 5 0.500v1.500q-3 1.200-5-0.500z" fill="#e89030"/><rect x="4.500" y="10.500" width="6" height="1" fill="#e8f0fc"/><rect x="3" y="12" width="10" height="1" fill="#081c4c"/></svg>
<span class="t" style="left:24.7px;top:3px;letter-spacing:0.05px;">create_load_formats.sas</span>
<span class="t" style="left:569px;top:3px;letter-spacing:0.3px;">1/28/2016</span>
<span class="t" style="left:643px;top:3px;letter-spacing:0.12px;">10:24:46 AM</span>
<svg class="i" style="left:6px;top:23px" width="16" height="18" viewBox="0 0 16 18"><path d="M0.500 0.500h10.500l3.500 3.500v13h-14z" fill="#fff" stroke="#c4c6d8"/><path d="M11 0.500v3.500h3.500" fill="#eef0f8" stroke="#c4c6d8"/><rect x="3" y="3" width="10" height="10" fill="#0c2c74"/><rect x="3" y="3" width="10" height="1.500" fill="#14409c"/><path d="M5 5h5.500l2.500-1v5l-3 1.500h-5z" fill="#9cd0f4"/><path d="M6.500 5h4l2.500-1.500v3l-3 2z" fill="#e4f4ff"/><path d="M4.500 6.500h3.500v1.200h-2v1.300h2.500v1.200h-4z" fill="#0c2c74"/><path d="M8 8.500q2 2 5 0.500v1.500q-3 1.200-5-0.500z" fill="#e89030"/><rect x="4.500" y="10.500" width="6" height="1" fill="#e8f0fc"/><rect x="3" y="12" width="10" height="1" fill="#081c4c"/></svg>
<span class="t" style="left:24.7px;top:24px;letter-spacing:0.15px;">create_security_roles_and_groups.sas</span>
<span class="t" style="left:569px;top:24px;letter-spacing:0.3px;">1/28/2016</span>
<span class="t" style="left:643px;top:24px;letter-spacing:0.12px;">10:24:47 AM</span>
<svg class="i" style="left:6px;top:44px" width="16" height="18" viewBox="0 0 16 18"><path d="M0.500 0.500h10.500l3.500 3.500v13h-14z" fill="#fff" stroke="#c4c6d8"/><path d="M11 0.500v3.500h3.500" fill="#eef0f8" stroke="#c4c6d8"/><rect x="3" y="3" width="10" height="10" fill="#0c2c74"/><rect x="3" y="3" width="10" height="1.500" fill="#14409c"/><path d="M5 5h5.500l2.500-1v5l-3 1.500h-5z" fill="#9cd0f4"/><path d="M6.500 5h4l2.500-1.500v3l-3 2z" fill="#e4f4ff"/><path d="M4.500 6.500h3.500v1.200h-2v1.300h2.500v1.200h-4z" fill="#0c2c74"/><path d="M8 8.500q2 2 5 0.500v1.500q-3 1.200-5-0.500z" fill="#e89030"/><rect x="4.500" y="10.500" width="6" height="1" fill="#e8f0fc"/><rect x="3" y="12" width="10" height="1" fill="#081c4c"/></svg>
<span class="t" style="left:24.7px;top:45px;letter-spacing:-0.03px;">create_subplan_dirs.sas</span>
<span class="t" style="left:569px;top:45px;letter-spacing:0.3px;">1/28/2016</span>
<span class="t" style="left:643px;top:45px;letter-spacing:0.12px;">10:24:46 AM</span>
<svg class="i" style="left:6px;top:65px" width="16" height="18" viewBox="0 0 16 18"><path d="M0.500 0.500h10.500l3.500 3.500v13h-14z" fill="#fff" stroke="#c4c6d8"/><path d="M11 0.500v3.500h3.500" fill="#eef0f8" stroke="#c4c6d8"/><rect x="3" y="3" width="10" height="10" fill="#0c2c74"/><rect x="3" y="3" width="10" height="1.500" fill="#14409c"/><path d="M5 5h5.500l2.500-1v5l-3 1.500h-5z" fill="#9cd0f4"/><path d="M6.500 5h4l2.500-1.500v3l-3 2z" fill="#e4f4ff"/><path d="M4.500 6.500h3.500v1.200h-2v1.300h2.500v1.200h-4z" fill="#0c2c74"/><path d="M8 8.500q2 2 5 0.500v1.500q-3 1.200-5-0.500z" fill="#e89030"/><rect x="4.500" y="10.500" width="6" height="1" fill="#e8f0fc"/><rect x="3" y="12" width="10" height="1" fill="#081c4c"/></svg>
<span class="t" style="left:24.7px;top:66px;letter-spacing:-0.17px;">dartspec.sas</span>
<span class="t" style="left:569px;top:66px;letter-spacing:0.3px;">1/28/2016</span>
<span class="t" style="left:643px;top:66px;letter-spacing:0.12px;">10:24:46 AM</span>
<svg class="i" style="left:6px;top:86px" width="16" height="18" viewBox="0 0 16 18"><path d="M0.500 0.500h10.500l3.500 3.500v13h-14z" fill="#fff" stroke="#c4c6d8"/><path d="M11 0.500v3.500h3.500" fill="#eef0f8" stroke="#c4c6d8"/><rect x="3" y="3" width="10" height="10" fill="#0c2c74"/><rect x="3" y="3" width="10" height="1.500" fill="#14409c"/><path d="M5 5h5.500l2.500-1v5l-3 1.500h-5z" fill="#9cd0f4"/><path d="M6.500 5h4l2.500-1.500v3l-3 2z" fill="#e4f4ff"/><path d="M4.500 6.500h3.500v1.200h-2v1.300h2.500v1.200h-4z" fill="#0c2c74"/><path d="M8 8.500q2 2 5 0.500v1.500q-3 1.200-5-0.500z" fill="#e89030"/><rect x="4.500" y="10.500" width="6" height="1" fill="#e8f0fc"/><rect x="3" y="12" width="10" height="1" fill="#081c4c"/></svg>
<span class="t" style="left:24.7px;top:87px;letter-spacing:-0.09px;">dartspec_bhiclms.sas</span>
<span class="t" style="left:569px;top:87px;letter-spacing:0.3px;">1/28/2016</span>
<span class="t" style="left:643px;top:87px;letter-spacing:0.12px;">10:24:46 AM</span>
<svg class="i" style="left:6px;top:107px" width="16" height="18" viewBox="0 0 16 18"><path d="M0.500 0.500h10.500l3.500 3.500v13h-14z" fill="#fff" stroke="#c4c6d8"/><path d="M11 0.500v3.500h3.500" fill="#eef0f8" stroke="#c4c6d8"/><rect x="3" y="3" width="10" height="10" fill="#0c2c74"/><rect x="3" y="3" width="10" height="1.500" fill="#14409c"/><path d="M5 5h5.500l2.500-1v5l-3 1.500h-5z" fill="#9cd0f4"/><path d="M6.500 5h4l2.500-1.500v3l-3 2z" fill="#e4f4ff"/><path d="M4.500 6.500h3.500v1.200h-2v1.300h2.500v1.200h-4z" fill="#0c2c74"/><path d="M8 8.500q2 2 5 0.500v1.500q-3 1.200-5-0.500z" fill="#e89030"/><rect x="4.500" y="10.500" width="6" height="1" fill="#e8f0fc"/><rect x="3" y="12" width="10" height="1" fill="#081c4c"/></svg>
<span class="t" style="left:24.7px;top:108px;">dartspec_bhimm.sas</span>
<span class="t" style="left:569px;top:108px;letter-spacing:0.3px;">1/28/2016</span>
<span class="t" style="left:643px;top:108px;letter-spacing:0.12px;">10:24:46 AM</span>
<svg class="i" style="left:6px;top:128px" width="16" height="18" viewBox="0 0 16 18"><path d="M0.500 0.500h10.500l3.500 3.500v13h-14z" fill="#fff" stroke="#c4c6d8"/><path d="M11 0.500v3.500h3.500" fill="#eef0f8" stroke="#c4c6d8"/><rect x="3" y="3" width="10" height="10" fill="#0c2c74"/><rect x="3" y="3" width="10" height="1.500" fill="#14409c"/><path d="M5 5h5.500l2.500-1v5l-3 1.500h-5z" fill="#9cd0f4"/><path d="M6.500 5h4l2.500-1.500v3l-3 2z" fill="#e4f4ff"/><path d="M4.500 6.500h3.500v1.200h-2v1.300h2.500v1.200h-4z" fill="#0c2c74"/><path d="M8 8.500q2 2 5 0.500v1.500q-3 1.200-5-0.500z" fill="#e89030"/><rect x="4.500" y="10.500" width="6" height="1" fill="#e8f0fc"/><rect x="3" y="12" width="10" height="1" fill="#081c4c"/></svg>
<span class="t" style="left:24.7px;top:129px;letter-spacing:-0.06px;">dartspec_clag.sas</span>
<span class="t" style="left:569px;top:129px;letter-spacing:0.3px;">4/15/2016</span>
<span class="t" style="left:643px;top:129px;letter-spacing:0.12px;">10:17:58 AM</span>
<svg class="i" style="left:6px;top:149px" width="16" height="18" viewBox="0 0 16 18"><path d="M0.500 0.500h10.500l3.500 3.500v13h-14z" fill="#fff" stroke="#c4c6d8"/><path d="M11 0.500v3.500h3.500" fill="#eef0f8" stroke="#c4c6d8"/><rect x="3" y="3" width="10" height="10" fill="#0c2c74"/><rect x="3" y="3" width="10" height="1.500" fill="#14409c"/><path d="M5 5h5.500l2.500-1v5l-3 1.500h-5z" fill="#9cd0f4"/><path d="M6.500 5h4l2.500-1.500v3l-3 2z" fill="#e4f4ff"/><path d="M4.500 6.500h3.500v1.200h-2v1.300h2.500v1.200h-4z" fill="#0c2c74"/><path d="M8 8.500q2 2 5 0.500v1.500q-3 1.200-5-0.500z" fill="#e89030"/><rect x="4.500" y="10.500" width="6" height="1" fill="#e8f0fc"/><rect x="3" y="12" width="10" height="1" fill="#081c4c"/></svg>
<span class="t" style="left:24.7px;top:150px;letter-spacing:-0.14px;">dartspec_claim.sas</span>
<span class="t" style="left:569px;top:150px;letter-spacing:0.3px;">4/15/2016</span>
<span class="t" style="left:643px;top:150px;letter-spacing:0.12px;">10:17:54 AM</span>
<svg class="i" style="left:6px;top:170px" width="16" height="18" viewBox="0 0 16 18"><path d="M0.500 0.500h10.500l3.500 3.500v13h-14z" fill="#fff" stroke="#c4c6d8"/><path d="M11 0.500v3.500h3.500" fill="#eef0f8" stroke="#c4c6d8"/><rect x="3" y="3" width="10" height="10" fill="#0c2c74"/><rect x="3" y="3" width="10" height="1.500" fill="#14409c"/><path d="M5 5h5.500l2.500-1v5l-3 1.500h-5z" fill="#9cd0f4"/><path d="M6.500 5h4l2.500-1.500v3l-3 2z" fill="#e4f4ff"/><path d="M4.500 6.500h3.500v1.200h-2v1.300h2.500v1.200h-4z" fill="#0c2c74"/><path d="M8 8.500q2 2 5 0.500v1.500q-3 1.200-5-0.500z" fill="#e89030"/><rect x="4.500" y="10.500" width="6" height="1" fill="#e8f0fc"/><rect x="3" y="12" width="10" height="1" fill="#081c4c"/></svg>
<span class="t" style="left:24.7px;top:171px;letter-spacing:0.06px;">dartspec_cp.sas</span>
<span class="t" style="left:569px;top:171px;letter-spacing:0.3px;">1/28/2016</span>
<span class="t" style="left:643px;top:171px;letter-spacing:0.12px;">10:24:46 AM</span>
<svg class="i" style="left:6px;top:191px" width="16" height="18" viewBox="0 0 16 18"><path d="M0.500 0.500h10.500l3.500 3.500v13h-14z" fill="#fff" stroke="#c4c6d8"/><path d="M11 0.500v3.500h3.500" fill="#eef0f8" stroke="#c4c6d8"/><rect x="3" y="3" width="10" height="10" fill="#0c2c74"/><rect x="3" y="3" width="10" height="1.500" fill="#14409c"/><path d="M5 5h5.500l2.500-1v5l-3 1.500h-5z" fill="#9cd0f4"/><path d="M6.500 5h4l2.500-1.500v3l-3 2z" fill="#e4f4ff"/><path d="M4.500 6.500h3.500v1.200h-2v1.300h2.500v1.200h-4z" fill="#0c2c74"/><path d="M8 8.500q2 2 5 0.500v1.500q-3 1.200-5-0.500z" fill="#e89030"/><rect x="4.500" y="10.500" width="6" height="1" fill="#e8f0fc"/><rect x="3" y="12" width="10" height="1" fill="#081c4c"/></svg>
<span class="t" style="left:24.7px;top:192px;letter-spacing:0.09px;">dartspec_de_vi.sas</span>
<span class="t" style="left:569px;top:192px;letter-spacing:0.3px;">1/28/2016</span>
<span class="t" style="left:643px;top:192px;letter-spacing:0.12px;">10:24:46 AM</span>
<svg class="i" style="left:6px;top:212px" width="16" height="18" viewBox="0 0 16 18"><path d="M0.500 0.500h10.500l3.500 3.500v13h-14z" fill="#fff" stroke="#c4c6d8"/><path d="M11 0.500v3.500h3.500" fill="#eef0f8" stroke="#c4c6d8"/><rect x="3" y="3" width="10" height="10" fill="#0c2c74"/><rect x="3" y="3" width="10" height="1.500" fill="#14409c"/><path d="M5 5h5.500l2.500-1v5l-3 1.500h-5z" fill="#9cd0f4"/><path d="M6.500 5h4l2.500-1.500v3l-3 2z" fill="#e4f4ff"/><path d="M4.500 6.500h3.500v1.200h-2v1.300h2.500v1.200h-4z" fill="#0c2c74"/><path d="M8 8.500q2 2 5 0.500v1.500q-3 1.200-5-0.500z" fill="#e89030"/><rect x="4.500" y="10.500" width="6" height="1" fill="#e8f0fc"/><rect x="3" y="12" width="10" height="1" fill="#081c4c"/></svg>
<span class="t" style="left:24.7px;top:213px;letter-spacing:-0.06px;">dartspec_di.sas</span>
<span class="t" style="left:569px;top:213px;letter-spacing:0.3px;">1/28/2016</span>
<span class="t" style="left:643px;top:213px;letter-spacing:0.12px;">10:24:46 AM</span>
<svg class="i" style="left:6px;top:233px" width="16" height="18" viewBox="0 0 16 18"><path d="M0.500 0.500h10.500l3.500 3.500v13h-14z" fill="#fff" stroke="#c4c6d8"/><path d="M11 0.500v3.500h3.500" fill="#eef0f8" stroke="#c4c6d8"/><rect x="3" y="3" width="10" height="10" fill="#0c2c74"/><rect x="3" y="3" width="10" height="1.500" fill="#14409c"/><path d="M5 5h5.500l2.500-1v5l-3 1.500h-5z" fill="#9cd0f4"/><path d="M6.500 5h4l2.500-1.500v3l-3 2z" fill="#e4f4ff"/><path d="M4.500 6.500h3.500v1.200h-2v1.300h2.500v1.200h-4z" fill="#0c2c74"/><path d="M8 8.500q2 2 5 0.500v1.500q-3 1.200-5-0.500z" fill="#e89030"/><rect x="4.500" y="10.500" width="6" height="1" fill="#e8f0fc"/><rect x="3" y="12" width="10" height="1" fill="#081c4c"/></svg>
<span class="t" style="left:24.7px;top:234px;letter-spacing:-0.06px;">dartspec_ip.sas</span>
<span class="t" style="left:569px;top:234px;letter-spacing:0.3px;">1/27/2016</span>
<span class="t" style="left:643px;top:234px;letter-spacing:0.12px;">3:06:36 PM</span>
<svg class="i" style="left:6px;top:254px" width="16" height="18" viewBox="0 0 16 18"><path d="M0.500 0.500h10.500l3.500 3.500v13h-14z" fill="#fff" stroke="#c4c6d8"/><path d="M11 0.500v3.500h3.500" fill="#eef0f8" stroke="#c4c6d8"/><rect x="3" y="3" width="10" height="10" fill="#0c2c74"/><rect x="3" y="3" width="10" height="1.500" fill="#14409c"/><path d="M5 5h5.500l2.500-1v5l-3 1.500h-5z" fill="#9cd0f4"/><path d="M6.500 5h4l2.500-1.500v3l-3 2z" fill="#e4f4ff"/><path d="M4.500 6.500h3.500v1.200h-2v1.300h2.500v1.200h-4z" fill="#0c2c74"/><path d="M8 8.500q2 2 5 0.500v1.500q-3 1.200-5-0.500z" fill="#e89030"/><rect x="4.500" y="10.500" width="6" height="1" fill="#e8f0fc"/><rect x="3" y="12" width="10" height="1" fill="#081c4c"/></svg>
<span class="t" style="left:24.7px;top:255px;letter-spacing:-0.04px;">dartspec_ipdet.sas</span>
<span class="t" style="left:569px;top:255px;letter-spacing:0.3px;">4/15/2016</span>
<span class="t" style="left:643px;top:255px;letter-spacing:0.12px;">10:17:58 AM</span>
<svg class="i" style="left:6px;top:275px" width="16" height="18" viewBox="0 0 16 18"><path d="M0.500 0.500h10.500l3.500 3.500v13h-14z" fill="#fff" stroke="#c4c6d8"/><path d="M11 0.500v3.500h3.500" fill="#eef0f8" stroke="#c4c6d8"/><rect x="3" y="3" width="10" height="10" fill="#0c2c74"/><rect x="3" y="3" width="10" height="1.500" fill="#14409c"/><path d="M5 5h5.500l2.500-1v5l-3 1.500h-5z" fill="#9cd0f4"/><path d="M6.500 5h4l2.500-1.500v3l-3 2z" fill="#e4f4ff"/><path d="M4.500 6.500h3.500v1.200h-2v1.300h2.500v1.200h-4z" fill="#0c2c74"/><path d="M8 8.500q2 2 5 0.500v1.500q-3 1.200-5-0.500z" fill="#e89030"/><rect x="4.500" y="10.500" width="6" height="1" fill="#e8f0fc"/><rect x="3" y="12" width="10" height="1" fill="#081c4c"/></svg>
<span class="t" style="left:24.7px;top:276px;letter-spacing:0.02px;">dartspec_med.sas</span>
<span class="t" style="left:569px;top:276px;letter-spacing:0.3px;">1/27/2016</span>
<span class="t" style="left:643px;top:276px;letter-spacing:0.12px;">3:06:36 PM</span>
<div class="sel" style="left:22px;top:294px;width:738px;height:21px;"></div>
<svg class="i" style="left:6px;top:296px" width="16" height="18" viewBox="0 0 16 18"><path d="M0.500 0.500h10.500l3.500 3.500v13h-14z" fill="#c0c4dc" stroke="#c4c6d8"/><path d="M11 0.500v3.500h3.500" fill="#b0b4d0" stroke="#c4c6d8"/><rect x="3" y="3" width="10" height="10" fill="#0c2c74"/><rect x="3" y="3" width="10" height="1.500" fill="#14409c"/><path d="M5 5h5.500l2.500-1v5l-3 1.500h-5z" fill="#9cd0f4"/><path d="M6.500 5h4l2.500-1.500v3l-3 2z" fill="#e4f4ff"/><path d="M4.500 6.500h3.500v1.200h-2v1.300h2.500v1.200h-4z" fill="#0c2c74"/><path d="M8 8.500q2 2 5 0.500v1.500q-3 1.200-5-0.500z" fill="#e89030"/><rect x="4.500" y="10.500" width="6" height="1" fill="#e8f0fc"/><rect x="3" y="12" width="10" height="1" fill="#081c4c"/></svg>
<span class="t" style="left:24.7px;top:297px;letter-spacing:0.1px;">dartspec_medrx.sas</span>
<span class="t" style="left:569px;top:297px;letter-spacing:0.3px;">3/21/2016</span>
<span class="t" style="left:643px;top:297px;letter-spacing:0.12px;">2:26:11 PM</span>
<svg class="i" style="left:6px;top:317px" width="16" height="18" viewBox="0 0 16 18"><path d="M0.500 0.500h10.500l3.500 3.500v13h-14z" fill="#fff" stroke="#c4c6d8"/><path d="M11 0.500v3.500h3.500" fill="#eef0f8" stroke="#c4c6d8"/><rect x="3" y="3" width="10" height="10" fill="#0c2c74"/><rect x="3" y="3" width="10" height="1.500" fill="#14409c"/><path d="M5 5h5.500l2.500-1v5l-3 1.500h-5z" fill="#9cd0f4"/><path d="M6.500 5h4l2.500-1.500v3l-3 2z" fill="#e4f4ff"/><path d="M4.500 6.500h3.500v1.200h-2v1.300h2.500v1.200h-4z" fill="#0c2c74"/><path d="M8 8.500q2 2 5 0.500v1.500q-3 1.200-5-0.500z" fill="#e89030"/><rect x="4.500" y="10.500" width="6" height="1" fill="#e8f0fc"/><rect x="3" y="12" width="10" height="1" fill="#081c4c"/></svg>
<span class="t" style="left:24.7px;top:318px;letter-spacing:-0.02px;">dartspec_mem.sas</span>
<span class="t" style="left:569px;top:318px;letter-spacing:0.3px;">5/25/2016</span>
<span class="t" style="left:643px;top:318px;letter-spacing:0.12px;">6:08:57 PM</span>
<svg class="i" style="left:6px;top:338px" width="16" height="18" viewBox="0 0 16 18"><path d="M0.500 0.500h10.500l3.500 3.500v13h-14z" fill="#fff" stroke="#c4c6d8"/><path d="M11 0.500v3.500h3.500" fill="#eef0f8" stroke="#c4c6d8"/><rect x="3" y="3" width="10" height="10" fill="#0c2c74"/><rect x="3" y="3" width="10" height="1.500" fill="#14409c"/><path d="M5 5h5.500l2.500-1v5l-3 1.500h-5z" fill="#9cd0f4"/><path d="M6.500 5h4l2.500-1.500v3l-3 2z" fill="#e4f4ff"/><path d="M4.500 6.500h3.500v1.200h-2v1.300h2.500v1.200h-4z" fill="#0c2c74"/><path d="M8 8.500q2 2 5 0.500v1.500q-3 1.200-5-0.500z" fill="#e89030"/><rect x="4.500" y="10.500" width="6" height="1" fill="#e8f0fc"/><rect x="3" y="12" width="10" height="1" fill="#081c4c"/></svg>
<span class="t" style="left:24.7px;top:339px;letter-spacing:0.13px;">dartspec_mhpnorm.sas</span>
<span class="t" style="left:569px;top:339px;letter-spacing:0.3px;">1/28/2016</span>
<span class="t" style="left:643px;top:339px;letter-spacing:0.12px;">10:24:46 AM</span>
</div>
<div class="track" style="left:1405px;top:192px;width:19px;height:375px;"></div>
<div class="btn" style="left:1405px;top:192px;width:19px;height:19px;"><div></div></div>
<svg class="i" style="left:1410px;top:198px" width="9" height="5" viewBox="0 0 9 5"><path d="M0 5h9L4.500 0z"/></svg>
<div class="btn" style="left:1405px;top:548px;width:19px;height:19px;"><div></div></div>
<svg class="i" style="left:1410px;top:555px" width="9" height="5" viewBox="0 0 9 5"><path d="M0 0h9L4.500 5z"/></svg>
<div class="btn" style="left:1405px;top:410px;width:19px;height:40px;"><div></div></div>
<div class="track" style="left:645px;top:567px;width:760px;height:19px;"></div>
<div class="btn" style="left:645px;top:567px;width:19px;height:19px;"><div></div></div>
<svg class="i" style="left:651px;top:572px" width="5" height="9" viewBox="0 0 5 9"><path d="M5 0v9L0 4.500z"/></svg>
<div class="btn" style="left:1386px;top:567px;width:19px;height:19px;"><div></div></div>
<svg class="i" style="left:1394px;top:572px" width="5" height="9" viewBox="0 0 5 9"><path d="M0 0v9L5 4.500z"/></svg>
<div class="btn" style="left:664px;top:567px;width:548px;height:19px;"><div></div></div>
<div style="left:1405px;top:567px;width:20px;height:19px;background:#d4d0c8"></div>
<span class="t" style="left:7px;top:571px;letter-spacing:0.09px;">419 B of 397 KB in 1 of 142</span>
<div class="band" style="left:7px;top:591px;width:1420px;height:27px;"></div>
<div class="grip" style="left:10px;top:593px;width:3px;height:23px;"></div>
<span class="t" style="left:16.6px;top:597px;letter-spacing:0.05px;">Command &gt;</span>
<div style="left:101px;top:594px;width:1322px;height:21px;background:#fff"></div>
<div style="left:1413px;top:595px;width:9px;height:19px;background:#d4d0c8"></div>
<svg class="i" style="left:1415px;top:604px" width="5" height="3" viewBox="0 0 5 3"><path d="M0 0h5L2.5 3z" fill="#000"/></svg>
<div class="band" style="left:7px;top:619px;width:1420px;height:27px;"></div>
<div class="grip" style="left:10px;top:621px;width:3px;height:23px;"></div>
<svg class="i" style="left:17px;top:625px" width="16" height="16" viewBox="0 0 16 16"><rect x="0.500" y="9.500" width="15" height="6" fill="#f4f8ff" stroke="#4a74b8"/><path d="M2.500 11l3 3M5.500 11l-3 3" stroke="#3a5aa0"/><path d="M13 0l2.500 2-6 8.500-3 1.500 0.500-3.500z" fill="#f0b840" stroke="#a87820" stroke-width="0.700"/><path d="M13 0l2.500 2-1.200 1.600-2.500-2z" fill="#e05050"/></svg>
<span class="t" style="left:36.5px;top:625px;letter-spacing:0.02px;">F2 Rename</span>
<svg class="i" style="left:113px;top:625px" width="16" height="16" viewBox="0 0 16 16"><path d="M0.500 2.500h10v13h-10z" fill="#f4f8ff" stroke="#7a9cd0"/><path d="M13.500 0.500l2 2-8 9.500-3 1.500 1-3.500z" fill="#f0b840" stroke="#a87820" stroke-width="0.700"/><path d="M13.500 0.500l2 2-1.300 1.500-2-2z" fill="#e05050"/><path d="M4.500 13.500l1-3 2 1.500z" fill="#f8e0b0"/></svg>
<span class="t" style="left:132px;top:625px;letter-spacing:-0.02px;">F4 Edit</span>
<svg class="i" style="left:182px;top:625px" width="16" height="16" viewBox="0 0 16 16"><rect x="0.500" y="4.500" width="8" height="11" fill="#f8fbff" stroke="#6474a0"/><path d="M2 7.500h2.500M2 9.500h5M2 11.500h5M2 13.500h5" stroke="#5870c8"/><path d="M6.500 0.500h6l3 3v11h-9z" fill="#fbfcff" stroke="#7c84ac"/><path d="M8.500 3.500h2.500M8.500 5.500h5" stroke="#6474b4"/><path d="M7 7.500h8.500v7h-5l-3.500 1z" fill="#3c6cd8"/><path d="M15 8v5.500l-1.800-1.800-3.700 3.800-1.500-1.500 3.700-3.800-1.700-1.700z" fill="#8cbcff" stroke="#b8d8ff" stroke-width="0.400"/></svg>
<span class="t" style="left:201.5px;top:625px;letter-spacing:-0.02px;">F5 Upload</span>
<svg class="i" style="left:271px;top:625px" width="16" height="16" viewBox="0 0 16 16"><rect x="0.500" y="4.500" width="8" height="11" fill="#f8fbff" stroke="#6474a0"/><path d="M2 7.500h2.500M2 9.500h5M2 11.500h5M2 13.500h5" stroke="#5870c8"/><path d="M6.500 0.500h6l3 3v11h-9z" fill="#fbfcff" stroke="#7c84ac"/><path d="M8.500 3.500h2.500M8.500 5.500h5" stroke="#6474b4"/><path d="M7 7.500h8.500v7h-5l-3.500 1z" fill="#3c6cd8"/><path d="M15 8v5.500l-1.800-1.800-3.700 3.800-1.500-1.500 3.700-3.800-1.700-1.700z" fill="#8cbcff" stroke="#b8d8ff" stroke-width="0.400"/></svg>
<span class="t" style="left:289px;top:625px;letter-spacing:-0.09px;">F6 Upload and Delete</span>
<svg class="i" style="left:426px;top:625px" width="16" height="16" viewBox="0 0 16 16"><path d="M0.500 3.500h5l1 1.500h8v10h-14z" fill="#f8d848" stroke="#c9a018"/><rect x="1" y="7" width="13" height="1" fill="#fff0a0"/><circle cx="12.500" cy="3.500" r="2.800" fill="#fff" stroke="#b8ccec" stroke-width="1.200"/></svg>
<span class="t" style="left:446px;top:625px;letter-spacing:0.07px;">F7 Create Directory</span>
<svg class="i" style="left:574px;top:625px" width="16" height="16" viewBox="0 0 16 16"><path d="M2 1l6 5 6-5 1.500 2-5 5 5 5-2 2-5.500-5-5.500 5-2-2 5-5-5-5z" fill="#e02020" stroke="#a81010" stroke-width="0.600"/></svg>
<span class="t" style="left:593px;top:625px;letter-spacing:-0.19px;">F8 Delete</span>
<svg class="i" style="left:657px;top:625px" width="16" height="16" viewBox="0 0 16 16"><path d="M0.500 0.500h7l3 3v10h-10z" fill="#f8fbff" stroke="#9ab0d0"/><path d="M7.500 0.500v3h3" fill="none" stroke="#9ab0d0"/><rect x="7.500" y="8.500" width="8" height="7" fill="#f4f8ff" stroke="#7a90b0"/><path d="M9 12l2 2 3.500-4" fill="none" stroke="#30a030" stroke-width="1.500"/></svg>
<span class="t" style="left:677px;top:625px;letter-spacing:0.01px;">F9 Properties</span>
<svg class="i" style="left:765px;top:625px" width="16" height="16" viewBox="0 0 16 16"><rect x="0.500" y="0.500" width="15" height="15" rx="1.500" fill="#d82020" stroke="#a01010"/><path d="M4 4l8 8M12 4l-8 8" stroke="#fff" stroke-width="2.200"/></svg>
<span class="t" style="left:784px;top:625px;letter-spacing:0.19px;">F10 Quit</span>
<div class="sunk" style="left:6px;top:648px;width:1149px;height:24px;"></div>
<div class="sunk" style="left:1157px;top:648px;width:40px;height:24px;"></div>
<div class="sunk" style="left:1200px;top:648px;width:83px;height:24px;"></div>
<div class="sunk" style="left:1286px;top:648px;width:41px;height:24px;"></div>
<div class="sunk" style="left:1330px;top:648px;width:97px;height:24px;"></div>
<svg class="i" style="left:1168px;top:652px" width="16" height="16" viewBox="0 0 16 16"><path d="M4.500 7v-3a3.500 3.500 0 0 1 7 0v3" fill="none" stroke="#b89020" stroke-width="1.600"/><rect x="2.500" y="6.500" width="11" height="9" rx="1" fill="#f0c838" stroke="#b08818"/><rect x="7.500" y="9.500" width="1.500" height="3" fill="#806010"/></svg>
<span class="t" style="left:1219.5px;top:653px;letter-spacing:0.6px;">SFTP-3</span>
<svg class="i" style="left:1296px;top:652px" width="16" height="16" viewBox="0 0 16 16"><path d="M1.500 1.500h4l1 1.500h6v7h-11z" fill="#f0d878" stroke="#c8b058"/><path d="M10.500 4v9M6 13.500h8" stroke="#7088b0" stroke-width="1.200"/><rect x="9" y="11.500" width="3" height="3" fill="#90a8d0"/></svg>
<span class="t" style="left:1351.8px;top:653px;letter-spacing:0.46px;">0:13:24</span>
<svg class="i" style="left:1413px;top:659px" width="13" height="13" viewBox="0 0 13 13"><path d="M13 1L1 13M13 5L5 13M13 9L9 13" stroke="#808080" stroke-width="1.200"/><path d="M13 0L0 13M13 4L4 13M13 8L8 13" stroke="#fff" stroke-width="1"/></svg>
</body></html>
